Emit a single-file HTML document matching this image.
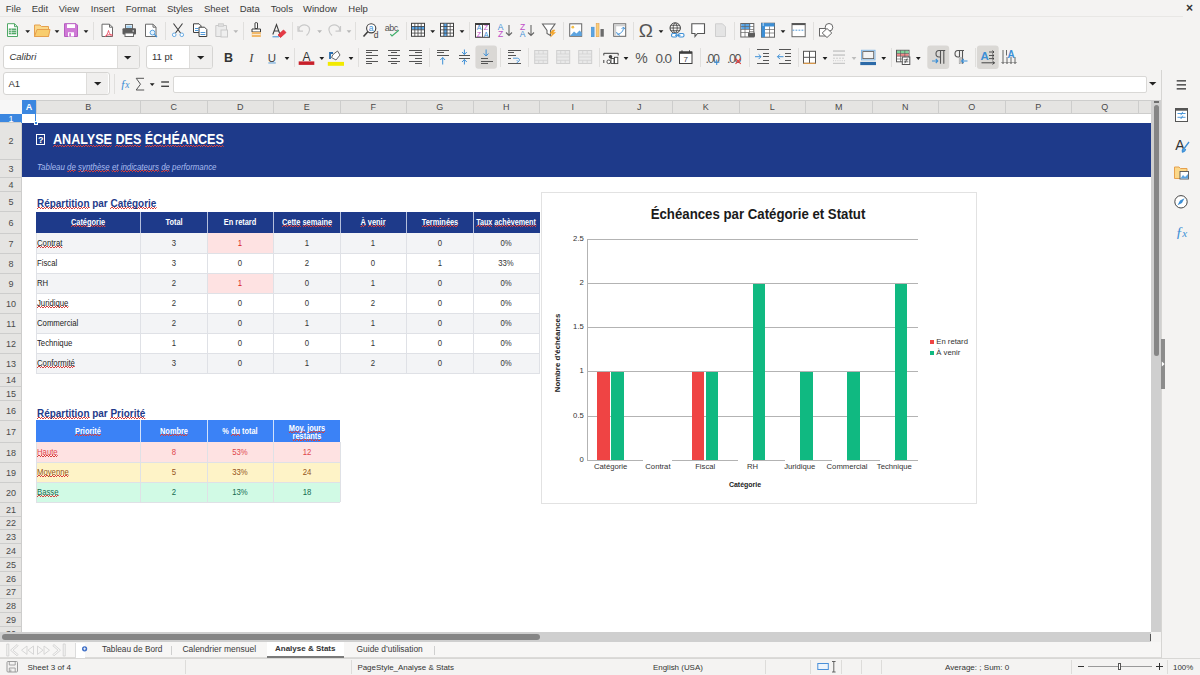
<!DOCTYPE html><html><head><meta charset="utf-8"><style>
html,body{margin:0;padding:0;}
body{width:1200px;height:675px;position:relative;overflow:hidden;background:#f4f3f2;font-family:"Liberation Sans", sans-serif;}
.t{position:absolute;white-space:nowrap;}
.r{position:absolute;box-sizing:border-box;}
.s{position:absolute;overflow:visible;}
.u{background-image:repeating-linear-gradient(90deg,#d8413d 0 1.5px,transparent 1.5px 3px),repeating-linear-gradient(90deg,transparent 0 1.5px,#d8413d 1.5px 3px);background-size:100% 1px,100% 1px;background-position:0 100%,0 calc(100% - 1px);background-repeat:no-repeat;}
</style></head><body>
<div class="t" style="left:5.80px;top:3.96px;font-size:9.5px;line-height:9.5px;color:#3a3a3a;font-weight:normal;font-style:normal;">File</div>
<div class="t" style="left:31.70px;top:3.96px;font-size:9.5px;line-height:9.5px;color:#3a3a3a;font-weight:normal;font-style:normal;">Edit</div>
<div class="t" style="left:58.70px;top:3.96px;font-size:9.5px;line-height:9.5px;color:#3a3a3a;font-weight:normal;font-style:normal;">View</div>
<div class="t" style="left:90.80px;top:3.96px;font-size:9.5px;line-height:9.5px;color:#3a3a3a;font-weight:normal;font-style:normal;">Insert</div>
<div class="t" style="left:125.80px;top:3.96px;font-size:9.5px;line-height:9.5px;color:#3a3a3a;font-weight:normal;font-style:normal;">Format</div>
<div class="t" style="left:167.00px;top:3.96px;font-size:9.5px;line-height:9.5px;color:#3a3a3a;font-weight:normal;font-style:normal;">Styles</div>
<div class="t" style="left:204.00px;top:3.96px;font-size:9.5px;line-height:9.5px;color:#3a3a3a;font-weight:normal;font-style:normal;">Sheet</div>
<div class="t" style="left:239.70px;top:3.96px;font-size:9.5px;line-height:9.5px;color:#3a3a3a;font-weight:normal;font-style:normal;">Data</div>
<div class="t" style="left:270.80px;top:3.96px;font-size:9.5px;line-height:9.5px;color:#3a3a3a;font-weight:normal;font-style:normal;">Tools</div>
<div class="t" style="left:303.00px;top:3.96px;font-size:9.5px;line-height:9.5px;color:#3a3a3a;font-weight:normal;font-style:normal;">Window</div>
<div class="t" style="left:348.30px;top:3.96px;font-size:9.5px;line-height:9.5px;color:#3a3a3a;font-weight:normal;font-style:normal;">Help</div>
<div class="r" style="left:0px;top:15.5px;width:1183px;height:1px;background:#e8e7e5;"></div>
<div class="r" style="left:93px;top:22px;width:1px;height:18px;background:#e0dfdd;"></div>
<div class="r" style="left:165px;top:22px;width:1px;height:18px;background:#e0dfdd;"></div>
<div class="r" style="left:243px;top:22px;width:1px;height:18px;background:#e0dfdd;"></div>
<div class="r" style="left:292px;top:22px;width:1px;height:18px;background:#e0dfdd;"></div>
<div class="r" style="left:355px;top:22px;width:1px;height:18px;background:#e0dfdd;"></div>
<div class="r" style="left:405.6px;top:22px;width:1px;height:18px;background:#e0dfdd;"></div>
<div class="r" style="left:469px;top:22px;width:1px;height:18px;background:#e0dfdd;"></div>
<div class="r" style="left:562.5px;top:22px;width:1px;height:18px;background:#e0dfdd;"></div>
<div class="r" style="left:633px;top:22px;width:1px;height:18px;background:#e0dfdd;"></div>
<div class="r" style="left:733.6px;top:22px;width:1px;height:18px;background:#e0dfdd;"></div>
<div class="r" style="left:813px;top:22px;width:1px;height:18px;background:#e0dfdd;"></div>
<div class="r" style="left:294px;top:48px;width:1px;height:19px;background:#e0dfdd;"></div>
<div class="r" style="left:358px;top:48px;width:1px;height:19px;background:#e0dfdd;"></div>
<div class="r" style="left:429px;top:48px;width:1px;height:19px;background:#e0dfdd;"></div>
<div class="r" style="left:500px;top:48px;width:1px;height:19px;background:#e0dfdd;"></div>
<div class="r" style="left:527.6px;top:48px;width:1px;height:19px;background:#e0dfdd;"></div>
<div class="r" style="left:598.6px;top:48px;width:1px;height:19px;background:#e0dfdd;"></div>
<div class="r" style="left:699.6px;top:48px;width:1px;height:19px;background:#e0dfdd;"></div>
<div class="r" style="left:749px;top:48px;width:1px;height:19px;background:#e0dfdd;"></div>
<div class="r" style="left:798px;top:48px;width:1px;height:19px;background:#e0dfdd;"></div>
<div class="r" style="left:890.5px;top:48px;width:1px;height:19px;background:#e0dfdd;"></div>
<div class="r" style="left:974.7px;top:48px;width:1px;height:19px;background:#e0dfdd;"></div>
<div class="r" style="left:113.6px;top:74px;width:1px;height:20px;background:#e0dfdd;"></div>
<div class="r" style="left:3px;top:45px;width:136.5px;height:23.5px;background:#ffffff;border:1px solid #d6d5d3;border-radius:3px;"></div>
<div class="r" style="left:116.5px;top:46px;width:22px;height:21.5px;background:#f0efee;border-left:1px solid #dedddb;border-radius:0 2px 2px 0;"></div>
<svg class="s" style="left:124.3px;top:55.7px;" width="7.4" height="4" viewBox="0 0 7.4 4"><path d="M0 0 L7.4 0 L3.7 3.6 Z" fill="#222"/></svg>
<div class="t" style="left:9.40px;top:52.46px;font-size:9.5px;line-height:9.5px;color:#333;font-weight:normal;font-style:italic;">Calibri</div>
<div class="r" style="left:145.5px;top:45px;width:67px;height:23.5px;background:#ffffff;border:1px solid #d6d5d3;border-radius:3px;"></div>
<div class="r" style="left:189px;top:46px;width:23px;height:21.5px;background:#f0efee;border-left:1px solid #dedddb;border-radius:0 2px 2px 0;"></div>
<svg class="s" style="left:196.8px;top:55.7px;" width="7.4" height="4" viewBox="0 0 7.4 4"><path d="M0 0 L7.4 0 L3.7 3.6 Z" fill="#222"/></svg>
<div class="t" style="left:152.00px;top:52.46px;font-size:9.5px;line-height:9.5px;color:#333;font-weight:normal;font-style:normal;">11 pt</div>
<div class="r" style="left:3px;top:72.4px;width:106.5px;height:23px;background:#ffffff;border:1px solid #d6d5d3;border-radius:3px;"></div>
<div class="r" style="left:86.4px;top:73.4px;width:22px;height:21px;background:#f0efee;border-left:1px solid #dedddb;border-radius:0 2px 2px 0;"></div>
<svg class="s" style="left:93.8px;top:82.2px;" width="7.4" height="4" viewBox="0 0 7.4 4"><path d="M0 0 L7.4 0 L3.7 3.6 Z" fill="#222"/></svg>
<div class="t" style="left:8.40px;top:79.46px;font-size:9.5px;line-height:9.5px;color:#333;font-weight:normal;font-style:normal;">A1</div>
<div class="r" style="left:173px;top:76px;width:973.5px;height:16.5px;background:#ffffff;border:1px solid #d9d8d6;border-radius:2px;"></div>
<svg class="s" style="left:1148.8px;top:82.2px;" width="7.4" height="4" viewBox="0 0 7.4 4"><path d="M0 0 L7.4 0 L3.7 3.6 Z" fill="#222"/></svg>
<div class="r" style="left:1161px;top:70px;width:39px;height:588px;background:#f4f3f2;border-left:1px solid #d6d5d3;"></div>
<div class="r" style="left:1151.3px;top:100px;width:10px;height:532px;background:#cfcfcf;"></div>
<div class="r" style="left:1154px;top:101px;width:4.7px;height:1.5px;background:#6e6e6e;"></div>
<div class="r" style="left:1153.8px;top:105px;width:5px;height:251px;background:#858585;border-radius:2.5px;"></div>
<div class="r" style="left:1161px;top:339px;width:4.3px;height:50px;background:#8c8c8c;"></div>
<svg class="s" style="left:1161px;top:361px;" width="4" height="6" viewBox="0 0 4 6"><path d="M0.8 0.5 L3.6 3 L0.8 5.5 Z" fill="#fff"/></svg>
<div class="r" style="left:0px;top:632px;width:1151.3px;height:10px;background:#cfcfcf;"></div>
<div class="r" style="left:2px;top:634px;width:538px;height:6px;background:#858585;border-radius:3px;"></div>
<div class="r" style="left:1149.5px;top:634px;width:1.2px;height:7px;background:#555;"></div>
<div class="r" style="left:0px;top:642px;width:1161px;height:16px;background:#f7f6f5;border-bottom:1px solid #dcdbd9;"></div>
<div class="r" style="left:75px;top:642.5px;width:9.5px;height:15px;background:#ffffff;border-left:1px solid #dcdcdc;"></div>
<div class="t" style="left:102.00px;top:645.37px;font-size:8.3px;line-height:8.3px;color:#3a3a3a;font-weight:normal;font-style:normal;">Tableau de Bord</div>
<div class="r" style="left:171px;top:646px;width:1px;height:9px;background:#cfcfcf;"></div>
<div class="t" style="left:182.40px;top:645.20px;font-size:8.5px;line-height:8.5px;color:#3a3a3a;font-weight:normal;font-style:normal;">Calendrier mensuel</div>
<div class="r" style="left:266.6px;top:646px;width:1px;height:9px;background:#cfcfcf;"></div>
<div class="r" style="left:267px;top:642px;width:77px;height:16px;background:#ffffff;"></div>
<div class="r" style="left:267px;top:656px;width:77px;height:1.8px;background:#7a7a7a;"></div>
<div class="t" style="left:275.00px;top:645.43px;font-size:8.0px;line-height:8.0px;color:#333;font-weight:bold;font-style:normal;">Analyse &amp; Stats</div>
<div class="t" style="left:356.60px;top:645.09px;font-size:8.4px;line-height:8.4px;color:#3a3a3a;font-weight:normal;font-style:normal;">Guide d’utilisation</div>
<div class="r" style="left:434.4px;top:646px;width:1px;height:9px;background:#cfcfcf;"></div>
<div class="r" style="left:0px;top:658px;width:1200px;height:17px;background:#f4f3f2;border-top:1px solid #d8d7d5;"></div>
<div class="t" style="left:27.40px;top:663.64px;font-size:8.1px;line-height:8.1px;color:#333;font-weight:normal;font-style:normal;">Sheet 3 of 4</div>
<div class="r" style="left:185px;top:660px;width:1px;height:14px;background:#dddcda;"></div>
<div class="r" style="left:351px;top:660px;width:1px;height:14px;background:#dddcda;"></div>
<div class="r" style="left:764.6px;top:660px;width:1px;height:14px;background:#dddcda;"></div>
<div class="r" style="left:810.4px;top:660px;width:1px;height:14px;background:#dddcda;"></div>
<div class="r" style="left:841.2px;top:660px;width:1px;height:14px;background:#dddcda;"></div>
<div class="r" style="left:861.4px;top:660px;width:1px;height:14px;background:#dddcda;"></div>
<div class="r" style="left:881px;top:660px;width:1px;height:14px;background:#dddcda;"></div>
<div class="r" style="left:1071.3px;top:660px;width:1px;height:14px;background:#dddcda;"></div>
<div class="r" style="left:1167px;top:660px;width:1px;height:14px;background:#dddcda;"></div>
<div class="t" style="left:357.40px;top:663.77px;font-size:7.95px;line-height:7.95px;color:#333;font-weight:normal;font-style:normal;">PageStyle_Analyse &amp; Stats</div>
<div class="t" style="left:653.00px;top:663.77px;font-size:7.95px;line-height:7.95px;color:#333;font-weight:normal;font-style:normal;">English (USA)</div>
<div class="t" style="left:945.00px;top:663.69px;font-size:8.05px;line-height:8.05px;color:#333;font-weight:normal;font-style:normal;">Average: ; Sum: 0</div>
<div class="t" style="left:1173.00px;top:663.81px;font-size:7.9px;line-height:7.9px;color:#333;font-weight:normal;font-style:normal;">100%</div>
<div class="r" style="left:1078px;top:666px;width:6px;height:1.2px;background:#333;"></div>
<div class="r" style="left:1088px;top:666.2px;width:64px;height:1px;background:#9a9a9a;"></div>
<div class="r" style="left:1118px;top:663px;width:2.8px;height:6.5px;background:#ffffff;border:1px solid #555;"></div>
<div class="r" style="left:1156px;top:666px;width:6.5px;height:1.2px;background:#333;"></div>
<div class="r" style="left:1158.6px;top:663.4px;width:1.2px;height:6.5px;background:#333;"></div>
<div class="r" style="left:1161px;top:642px;width:1px;height:16px;background:#d6d5d3;"></div>
<div class="t" style="left:1189.40px;top:2.34px;font-size:12px;line-height:12px;color:#333;font-weight:bold;font-style:normal;transform:translateX(-50%) scaleX(1.0);transform-origin:50% 0;">×</div>
<div style="position:absolute;left:0;top:0;width:1151.3px;height:632px;overflow:hidden">
<div class="r" style="left:0px;top:100px;width:1151.3px;height:532px;background:#ffffff;"></div>
<div class="r" style="left:22px;top:100px;width:1129.3px;height:14px;background:#e5e4e2;border-top:1px solid #cdcdcc;border-bottom:1px solid #cdcdcc;"></div>
<div class="r" style="left:0px;top:100px;width:22px;height:14px;background:#f7f7f7;"></div>
<div class="r" style="left:22px;top:100px;width:14px;height:14px;background:#3b87e0;"></div>
<div class="t" style="left:29.00px;top:102.88px;font-size:9px;line-height:9px;color:#ffffff;font-weight:bold;font-style:normal;transform:translateX(-50%) scaleX(1.0);transform-origin:50% 0;">A</div>
<div class="r" style="left:35.5px;top:101px;width:1px;height:13px;background:#cdcdcc;"></div>
<div class="t" style="left:88.25px;top:102.88px;font-size:9px;line-height:9px;color:#4a4a4a;font-weight:normal;font-style:normal;transform:translateX(-50%) scaleX(1.0);transform-origin:50% 0;">B</div>
<div class="r" style="left:140.0px;top:101px;width:1px;height:13px;background:#cdcdcc;"></div>
<div class="t" style="left:173.75px;top:102.88px;font-size:9px;line-height:9px;color:#4a4a4a;font-weight:normal;font-style:normal;transform:translateX(-50%) scaleX(1.0);transform-origin:50% 0;">C</div>
<div class="r" style="left:206.5px;top:101px;width:1px;height:13px;background:#cdcdcc;"></div>
<div class="t" style="left:240.25px;top:102.88px;font-size:9px;line-height:9px;color:#4a4a4a;font-weight:normal;font-style:normal;transform:translateX(-50%) scaleX(1.0);transform-origin:50% 0;">D</div>
<div class="r" style="left:273.0px;top:101px;width:1px;height:13px;background:#cdcdcc;"></div>
<div class="t" style="left:306.75px;top:102.88px;font-size:9px;line-height:9px;color:#4a4a4a;font-weight:normal;font-style:normal;transform:translateX(-50%) scaleX(1.0);transform-origin:50% 0;">E</div>
<div class="r" style="left:339.5px;top:101px;width:1px;height:13px;background:#cdcdcc;"></div>
<div class="t" style="left:373.25px;top:102.88px;font-size:9px;line-height:9px;color:#4a4a4a;font-weight:normal;font-style:normal;transform:translateX(-50%) scaleX(1.0);transform-origin:50% 0;">F</div>
<div class="r" style="left:406.0px;top:101px;width:1px;height:13px;background:#cdcdcc;"></div>
<div class="t" style="left:439.75px;top:102.88px;font-size:9px;line-height:9px;color:#4a4a4a;font-weight:normal;font-style:normal;transform:translateX(-50%) scaleX(1.0);transform-origin:50% 0;">G</div>
<div class="r" style="left:472.5px;top:101px;width:1px;height:13px;background:#cdcdcc;"></div>
<div class="t" style="left:506.25px;top:102.88px;font-size:9px;line-height:9px;color:#4a4a4a;font-weight:normal;font-style:normal;transform:translateX(-50%) scaleX(1.0);transform-origin:50% 0;">H</div>
<div class="r" style="left:539.0px;top:101px;width:1px;height:13px;background:#cdcdcc;"></div>
<div class="t" style="left:572.75px;top:102.88px;font-size:9px;line-height:9px;color:#4a4a4a;font-weight:normal;font-style:normal;transform:translateX(-50%) scaleX(1.0);transform-origin:50% 0;">I</div>
<div class="r" style="left:605.5px;top:101px;width:1px;height:13px;background:#cdcdcc;"></div>
<div class="t" style="left:639.25px;top:102.88px;font-size:9px;line-height:9px;color:#4a4a4a;font-weight:normal;font-style:normal;transform:translateX(-50%) scaleX(1.0);transform-origin:50% 0;">J</div>
<div class="r" style="left:672.0px;top:101px;width:1px;height:13px;background:#cdcdcc;"></div>
<div class="t" style="left:705.75px;top:102.88px;font-size:9px;line-height:9px;color:#4a4a4a;font-weight:normal;font-style:normal;transform:translateX(-50%) scaleX(1.0);transform-origin:50% 0;">K</div>
<div class="r" style="left:738.5px;top:101px;width:1px;height:13px;background:#cdcdcc;"></div>
<div class="t" style="left:772.25px;top:102.88px;font-size:9px;line-height:9px;color:#4a4a4a;font-weight:normal;font-style:normal;transform:translateX(-50%) scaleX(1.0);transform-origin:50% 0;">L</div>
<div class="r" style="left:805.0px;top:101px;width:1px;height:13px;background:#cdcdcc;"></div>
<div class="t" style="left:838.75px;top:102.88px;font-size:9px;line-height:9px;color:#4a4a4a;font-weight:normal;font-style:normal;transform:translateX(-50%) scaleX(1.0);transform-origin:50% 0;">M</div>
<div class="r" style="left:871.5px;top:101px;width:1px;height:13px;background:#cdcdcc;"></div>
<div class="t" style="left:905.25px;top:102.88px;font-size:9px;line-height:9px;color:#4a4a4a;font-weight:normal;font-style:normal;transform:translateX(-50%) scaleX(1.0);transform-origin:50% 0;">N</div>
<div class="r" style="left:938.0px;top:101px;width:1px;height:13px;background:#cdcdcc;"></div>
<div class="t" style="left:971.75px;top:102.88px;font-size:9px;line-height:9px;color:#4a4a4a;font-weight:normal;font-style:normal;transform:translateX(-50%) scaleX(1.0);transform-origin:50% 0;">O</div>
<div class="r" style="left:1004.5px;top:101px;width:1px;height:13px;background:#cdcdcc;"></div>
<div class="t" style="left:1038.25px;top:102.88px;font-size:9px;line-height:9px;color:#4a4a4a;font-weight:normal;font-style:normal;transform:translateX(-50%) scaleX(1.0);transform-origin:50% 0;">P</div>
<div class="r" style="left:1071.0px;top:101px;width:1px;height:13px;background:#cdcdcc;"></div>
<div class="t" style="left:1104.75px;top:102.88px;font-size:9px;line-height:9px;color:#4a4a4a;font-weight:normal;font-style:normal;transform:translateX(-50%) scaleX(1.0);transform-origin:50% 0;">Q</div>
<div class="r" style="left:1137.5px;top:101px;width:1px;height:13px;background:#cdcdcc;"></div>
<div class="r" style="left:0px;top:114px;width:22px;height:518px;background:#e5e4e2;border-right:1px solid #cdcdcc;"></div>
<div class="r" style="left:0px;top:114px;width:22px;height:8.599999999999994px;background:#3b87e0;"></div>
<div class="r" style="left:0px;top:122.1px;width:21px;height:1px;background:#cdcdcc;"></div>
<div class="t" style="left:11.00px;top:114.78px;font-size:9px;line-height:9px;color:#ffffff;font-weight:normal;font-style:normal;transform:translateX(-50%) scaleX(1.0);transform-origin:50% 0;">1</div>
<div class="r" style="left:0px;top:158.8px;width:21px;height:1px;background:#cdcdcc;"></div>
<div class="t" style="left:11.00px;top:137.43px;font-size:9px;line-height:9px;color:#4a4a4a;font-weight:normal;font-style:normal;transform:translateX(-50%) scaleX(1.0);transform-origin:50% 0;">2</div>
<div class="r" style="left:0px;top:176.9px;width:21px;height:1px;background:#cdcdcc;"></div>
<div class="t" style="left:11.00px;top:164.83px;font-size:9px;line-height:9px;color:#4a4a4a;font-weight:normal;font-style:normal;transform:translateX(-50%) scaleX(1.0);transform-origin:50% 0;">3</div>
<div class="r" style="left:0px;top:190.8px;width:21px;height:1px;background:#cdcdcc;"></div>
<div class="t" style="left:11.00px;top:180.83px;font-size:9px;line-height:9px;color:#4a4a4a;font-weight:normal;font-style:normal;transform:translateX(-50%) scaleX(1.0);transform-origin:50% 0;">4</div>
<div class="r" style="left:0px;top:210.5px;width:21px;height:1px;background:#cdcdcc;"></div>
<div class="t" style="left:11.00px;top:197.63px;font-size:9px;line-height:9px;color:#4a4a4a;font-weight:normal;font-style:normal;transform:translateX(-50%) scaleX(1.0);transform-origin:50% 0;">5</div>
<div class="r" style="left:0px;top:232.8px;width:21px;height:1px;background:#cdcdcc;"></div>
<div class="t" style="left:11.00px;top:218.63px;font-size:9px;line-height:9px;color:#4a4a4a;font-weight:normal;font-style:normal;transform:translateX(-50%) scaleX(1.0);transform-origin:50% 0;">6</div>
<div class="r" style="left:0px;top:252.8px;width:21px;height:1px;background:#cdcdcc;"></div>
<div class="t" style="left:11.00px;top:239.78px;font-size:9px;line-height:9px;color:#4a4a4a;font-weight:normal;font-style:normal;transform:translateX(-50%) scaleX(1.0);transform-origin:50% 0;">7</div>
<div class="r" style="left:0px;top:272.8px;width:21px;height:1px;background:#cdcdcc;"></div>
<div class="t" style="left:11.00px;top:259.78px;font-size:9px;line-height:9px;color:#4a4a4a;font-weight:normal;font-style:normal;transform:translateX(-50%) scaleX(1.0);transform-origin:50% 0;">8</div>
<div class="r" style="left:0px;top:292.8px;width:21px;height:1px;background:#cdcdcc;"></div>
<div class="t" style="left:11.00px;top:279.78px;font-size:9px;line-height:9px;color:#4a4a4a;font-weight:normal;font-style:normal;transform:translateX(-50%) scaleX(1.0);transform-origin:50% 0;">9</div>
<div class="r" style="left:0px;top:312.8px;width:21px;height:1px;background:#cdcdcc;"></div>
<div class="t" style="left:11.00px;top:299.78px;font-size:9px;line-height:9px;color:#4a4a4a;font-weight:normal;font-style:normal;transform:translateX(-50%) scaleX(1.0);transform-origin:50% 0;">10</div>
<div class="r" style="left:0px;top:332.8px;width:21px;height:1px;background:#cdcdcc;"></div>
<div class="t" style="left:11.00px;top:319.78px;font-size:9px;line-height:9px;color:#4a4a4a;font-weight:normal;font-style:normal;transform:translateX(-50%) scaleX(1.0);transform-origin:50% 0;">11</div>
<div class="r" style="left:0px;top:352.8px;width:21px;height:1px;background:#cdcdcc;"></div>
<div class="t" style="left:11.00px;top:339.78px;font-size:9px;line-height:9px;color:#4a4a4a;font-weight:normal;font-style:normal;transform:translateX(-50%) scaleX(1.0);transform-origin:50% 0;">12</div>
<div class="r" style="left:0px;top:372.5px;width:21px;height:1px;background:#cdcdcc;"></div>
<div class="t" style="left:11.00px;top:359.63px;font-size:9px;line-height:9px;color:#4a4a4a;font-weight:normal;font-style:normal;transform:translateX(-50%) scaleX(1.0);transform-origin:50% 0;">13</div>
<div class="r" style="left:0px;top:385.9px;width:21px;height:1px;background:#cdcdcc;"></div>
<div class="t" style="left:11.00px;top:376.18px;font-size:9px;line-height:9px;color:#4a4a4a;font-weight:normal;font-style:normal;transform:translateX(-50%) scaleX(1.0);transform-origin:50% 0;">14</div>
<div class="r" style="left:0px;top:399.8px;width:21px;height:1px;background:#cdcdcc;"></div>
<div class="t" style="left:11.00px;top:389.83px;font-size:9px;line-height:9px;color:#4a4a4a;font-weight:normal;font-style:normal;transform:translateX(-50%) scaleX(1.0);transform-origin:50% 0;">15</div>
<div class="r" style="left:0px;top:419.8px;width:21px;height:1px;background:#cdcdcc;"></div>
<div class="t" style="left:11.00px;top:406.78px;font-size:9px;line-height:9px;color:#4a4a4a;font-weight:normal;font-style:normal;transform:translateX(-50%) scaleX(1.0);transform-origin:50% 0;">16</div>
<div class="r" style="left:0px;top:441.9px;width:21px;height:1px;background:#cdcdcc;"></div>
<div class="t" style="left:11.00px;top:427.83px;font-size:9px;line-height:9px;color:#4a4a4a;font-weight:normal;font-style:normal;transform:translateX(-50%) scaleX(1.0);transform-origin:50% 0;">17</div>
<div class="r" style="left:0px;top:461.9px;width:21px;height:1px;background:#cdcdcc;"></div>
<div class="t" style="left:11.00px;top:448.88px;font-size:9px;line-height:9px;color:#4a4a4a;font-weight:normal;font-style:normal;transform:translateX(-50%) scaleX(1.0);transform-origin:50% 0;">18</div>
<div class="r" style="left:0px;top:481.9px;width:21px;height:1px;background:#cdcdcc;"></div>
<div class="t" style="left:11.00px;top:468.88px;font-size:9px;line-height:9px;color:#4a4a4a;font-weight:normal;font-style:normal;transform:translateX(-50%) scaleX(1.0);transform-origin:50% 0;">19</div>
<div class="r" style="left:0px;top:501.8px;width:21px;height:1px;background:#cdcdcc;"></div>
<div class="t" style="left:11.00px;top:488.83px;font-size:9px;line-height:9px;color:#4a4a4a;font-weight:normal;font-style:normal;transform:translateX(-50%) scaleX(1.0);transform-origin:50% 0;">20</div>
<div class="r" style="left:0px;top:515.6px;width:21px;height:1px;background:#cdcdcc;"></div>
<div class="t" style="left:11.00px;top:505.68px;font-size:9px;line-height:9px;color:#4a4a4a;font-weight:normal;font-style:normal;transform:translateX(-50%) scaleX(1.0);transform-origin:50% 0;">21</div>
<div class="r" style="left:0px;top:529.4px;width:21px;height:1px;background:#cdcdcc;"></div>
<div class="t" style="left:11.00px;top:519.48px;font-size:9px;line-height:9px;color:#4a4a4a;font-weight:normal;font-style:normal;transform:translateX(-50%) scaleX(1.0);transform-origin:50% 0;">22</div>
<div class="r" style="left:0px;top:543.1999999999999px;width:21px;height:1px;background:#cdcdcc;"></div>
<div class="t" style="left:11.00px;top:533.28px;font-size:9px;line-height:9px;color:#4a4a4a;font-weight:normal;font-style:normal;transform:translateX(-50%) scaleX(1.0);transform-origin:50% 0;">23</div>
<div class="r" style="left:0px;top:556.9999999999999px;width:21px;height:1px;background:#cdcdcc;"></div>
<div class="t" style="left:11.00px;top:547.08px;font-size:9px;line-height:9px;color:#4a4a4a;font-weight:normal;font-style:normal;transform:translateX(-50%) scaleX(1.0);transform-origin:50% 0;">24</div>
<div class="r" style="left:0px;top:570.7999999999998px;width:21px;height:1px;background:#cdcdcc;"></div>
<div class="t" style="left:11.00px;top:560.88px;font-size:9px;line-height:9px;color:#4a4a4a;font-weight:normal;font-style:normal;transform:translateX(-50%) scaleX(1.0);transform-origin:50% 0;">25</div>
<div class="r" style="left:0px;top:584.5999999999998px;width:21px;height:1px;background:#cdcdcc;"></div>
<div class="t" style="left:11.00px;top:574.68px;font-size:9px;line-height:9px;color:#4a4a4a;font-weight:normal;font-style:normal;transform:translateX(-50%) scaleX(1.0);transform-origin:50% 0;">26</div>
<div class="r" style="left:0px;top:598.3999999999997px;width:21px;height:1px;background:#cdcdcc;"></div>
<div class="t" style="left:11.00px;top:588.48px;font-size:9px;line-height:9px;color:#4a4a4a;font-weight:normal;font-style:normal;transform:translateX(-50%) scaleX(1.0);transform-origin:50% 0;">27</div>
<div class="r" style="left:0px;top:612.1999999999997px;width:21px;height:1px;background:#cdcdcc;"></div>
<div class="t" style="left:11.00px;top:602.28px;font-size:9px;line-height:9px;color:#4a4a4a;font-weight:normal;font-style:normal;transform:translateX(-50%) scaleX(1.0);transform-origin:50% 0;">28</div>
<div class="r" style="left:0px;top:625.9999999999997px;width:21px;height:1px;background:#cdcdcc;"></div>
<div class="t" style="left:11.00px;top:616.08px;font-size:9px;line-height:9px;color:#4a4a4a;font-weight:normal;font-style:normal;transform:translateX(-50%) scaleX(1.0);transform-origin:50% 0;">29</div>
<div class="r" style="left:0px;top:639.7999999999996px;width:21px;height:1px;background:#cdcdcc;"></div>
<div class="t" style="left:11.00px;top:629.88px;font-size:9px;line-height:9px;color:#4a4a4a;font-weight:normal;font-style:normal;transform:translateX(-50%) scaleX(1.0);transform-origin:50% 0;">30</div>
<div class="r" style="left:22px;top:122.6px;width:1129.3px;height:54.80000000000001px;background:#1e3a8a;"></div>
<div class="r" style="left:35px;top:114px;width:1.2px;height:9px;background:#3b87e0;"></div>
<div class="r" style="left:33.5px;top:121px;width:4px;height:4px;background:#3b87e0;border:1px solid #fff;"></div>
<div class="r" style="left:36.3px;top:134.3px;width:8.8px;height:11px;background:transparent;border:1px solid #ffffff;"></div>
<div class="t" style="left:40.70px;top:135.68px;font-size:9px;line-height:9px;color:#ffffff;font-weight:bold;font-style:normal;transform:translateX(-50%) scaleX(1.0);transform-origin:50% 0;">?</div>
<div class="t" style="left:52.50px;top:132.44px;font-size:14.6px;line-height:14.6px;color:#ffffff;font-weight:bold;font-style:normal;transform:scaleX(0.862);transform-origin:0 0;"><span class="u">ANALYSE</span> <span class="u">DES</span> <span class="u">ÉCHÉANCES</span></div>
<div class="t" style="left:37.00px;top:163.02px;font-size:8.6px;line-height:8.6px;color:#a8bdf0;font-weight:normal;font-style:italic;transform:scaleX(0.92);transform-origin:0 0;">Tableau <span class="u">de</span> <span class="u">synthèse</span> <span class="u">et</span> <span class="u">indicateurs</span> <span class="u">de</span> performance</div>
<div class="t" style="left:37.00px;top:198.43px;font-size:11.3px;line-height:11.3px;color:#1e3a8a;font-weight:bold;font-style:normal;transform:scaleX(0.88);transform-origin:0 0;"><span class="u">Répartition</span> par <span class="u">Catégorie</span></div>
<div class="t" style="left:37.00px;top:407.93px;font-size:11.3px;line-height:11.3px;color:#1e3a8a;font-weight:bold;font-style:normal;transform:scaleX(0.88);transform-origin:0 0;"><span class="u">Répartition</span> par <span class="u">Priorité</span></div>
<div class="r" style="left:36px;top:211.5px;width:503.5px;height:21.80000000000001px;background:#1e3a8a;"></div>
<div class="t" style="left:88.25px;top:217.72px;font-size:8.6px;line-height:8.6px;color:#ffffff;font-weight:bold;font-style:normal;transform:translateX(-50%) scaleX(0.86);transform-origin:50% 0;"><span class="u">Catégorie</span></div>
<div class="t" style="left:173.75px;top:217.72px;font-size:8.6px;line-height:8.6px;color:#ffffff;font-weight:bold;font-style:normal;transform:translateX(-50%) scaleX(0.86);transform-origin:50% 0;">Total</div>
<div class="r" style="left:140.0px;top:211.5px;width:1px;height:21.80000000000001px;background:#b4bfdc;"></div>
<div class="t" style="left:240.25px;top:217.72px;font-size:8.6px;line-height:8.6px;color:#ffffff;font-weight:bold;font-style:normal;transform:translateX(-50%) scaleX(0.86);transform-origin:50% 0;">En retard</div>
<div class="r" style="left:206.5px;top:211.5px;width:1px;height:21.80000000000001px;background:#b4bfdc;"></div>
<div class="t" style="left:306.75px;top:217.72px;font-size:8.6px;line-height:8.6px;color:#ffffff;font-weight:bold;font-style:normal;transform:translateX(-50%) scaleX(0.86);transform-origin:50% 0;"><span class="u">Cette</span> <span class="u">semaine</span></div>
<div class="r" style="left:273.0px;top:211.5px;width:1px;height:21.80000000000001px;background:#b4bfdc;"></div>
<div class="t" style="left:373.25px;top:217.72px;font-size:8.6px;line-height:8.6px;color:#ffffff;font-weight:bold;font-style:normal;transform:translateX(-50%) scaleX(0.86);transform-origin:50% 0;"><span class="u">À</span> <span class="u">venir</span></div>
<div class="r" style="left:339.5px;top:211.5px;width:1px;height:21.80000000000001px;background:#b4bfdc;"></div>
<div class="t" style="left:439.75px;top:217.72px;font-size:8.6px;line-height:8.6px;color:#ffffff;font-weight:bold;font-style:normal;transform:translateX(-50%) scaleX(0.86);transform-origin:50% 0;"><span class="u">Terminées</span></div>
<div class="r" style="left:406.0px;top:211.5px;width:1px;height:21.80000000000001px;background:#b4bfdc;"></div>
<div class="t" style="left:506.25px;top:217.72px;font-size:8.6px;line-height:8.6px;color:#ffffff;font-weight:bold;font-style:normal;transform:translateX(-50%) scaleX(0.835);transform-origin:50% 0;"><span class="u">Taux</span> <span class="u">achèvement</span></div>
<div class="r" style="left:472.5px;top:211.5px;width:1px;height:21.80000000000001px;background:#b4bfdc;"></div>
<div class="r" style="left:36px;top:233.3px;width:503.5px;height:20.0px;background:#f3f4f6;"></div>
<div class="t" style="left:37.00px;top:239.22px;font-size:8.6px;line-height:8.6px;color:#222222;font-weight:normal;font-style:normal;transform:scaleX(0.9);transform-origin:0 0;"><span class="u">Contrat</span></div>
<div class="t" style="left:173.75px;top:239.22px;font-size:8.6px;line-height:8.6px;color:#333333;font-weight:normal;font-style:normal;transform:translateX(-50%) scaleX(0.9);transform-origin:50% 0;">3</div>
<div class="r" style="left:207px;top:233.3px;width:66.5px;height:20.0px;background:#fee2e2;"></div>
<div class="t" style="left:240.25px;top:239.22px;font-size:8.6px;line-height:8.6px;color:#dc2626;font-weight:normal;font-style:normal;transform:translateX(-50%) scaleX(0.9);transform-origin:50% 0;">1</div>
<div class="t" style="left:306.75px;top:239.22px;font-size:8.6px;line-height:8.6px;color:#333333;font-weight:normal;font-style:normal;transform:translateX(-50%) scaleX(0.9);transform-origin:50% 0;">1</div>
<div class="t" style="left:373.25px;top:239.22px;font-size:8.6px;line-height:8.6px;color:#333333;font-weight:normal;font-style:normal;transform:translateX(-50%) scaleX(0.9);transform-origin:50% 0;">1</div>
<div class="t" style="left:439.75px;top:239.22px;font-size:8.6px;line-height:8.6px;color:#333333;font-weight:normal;font-style:normal;transform:translateX(-50%) scaleX(0.9);transform-origin:50% 0;">0</div>
<div class="t" style="left:506.25px;top:239.22px;font-size:8.6px;line-height:8.6px;color:#333333;font-weight:normal;font-style:normal;transform:translateX(-50%) scaleX(0.9);transform-origin:50% 0;">0%</div>
<div class="r" style="left:36px;top:253.3px;width:503.5px;height:20.0px;background:#ffffff;"></div>
<div class="t" style="left:37.00px;top:259.22px;font-size:8.6px;line-height:8.6px;color:#222222;font-weight:normal;font-style:normal;transform:scaleX(0.9);transform-origin:0 0;">Fiscal</div>
<div class="t" style="left:173.75px;top:259.22px;font-size:8.6px;line-height:8.6px;color:#333333;font-weight:normal;font-style:normal;transform:translateX(-50%) scaleX(0.9);transform-origin:50% 0;">3</div>
<div class="t" style="left:240.25px;top:259.22px;font-size:8.6px;line-height:8.6px;color:#333333;font-weight:normal;font-style:normal;transform:translateX(-50%) scaleX(0.9);transform-origin:50% 0;">0</div>
<div class="t" style="left:306.75px;top:259.22px;font-size:8.6px;line-height:8.6px;color:#333333;font-weight:normal;font-style:normal;transform:translateX(-50%) scaleX(0.9);transform-origin:50% 0;">2</div>
<div class="t" style="left:373.25px;top:259.22px;font-size:8.6px;line-height:8.6px;color:#333333;font-weight:normal;font-style:normal;transform:translateX(-50%) scaleX(0.9);transform-origin:50% 0;">0</div>
<div class="t" style="left:439.75px;top:259.22px;font-size:8.6px;line-height:8.6px;color:#333333;font-weight:normal;font-style:normal;transform:translateX(-50%) scaleX(0.9);transform-origin:50% 0;">1</div>
<div class="t" style="left:506.25px;top:259.22px;font-size:8.6px;line-height:8.6px;color:#333333;font-weight:normal;font-style:normal;transform:translateX(-50%) scaleX(0.9);transform-origin:50% 0;">33%</div>
<div class="r" style="left:36px;top:273.3px;width:503.5px;height:20.0px;background:#f3f4f6;"></div>
<div class="t" style="left:37.00px;top:279.22px;font-size:8.6px;line-height:8.6px;color:#222222;font-weight:normal;font-style:normal;transform:scaleX(0.9);transform-origin:0 0;">RH</div>
<div class="t" style="left:173.75px;top:279.22px;font-size:8.6px;line-height:8.6px;color:#333333;font-weight:normal;font-style:normal;transform:translateX(-50%) scaleX(0.9);transform-origin:50% 0;">2</div>
<div class="r" style="left:207px;top:273.3px;width:66.5px;height:20.0px;background:#fee2e2;"></div>
<div class="t" style="left:240.25px;top:279.22px;font-size:8.6px;line-height:8.6px;color:#dc2626;font-weight:normal;font-style:normal;transform:translateX(-50%) scaleX(0.9);transform-origin:50% 0;">1</div>
<div class="t" style="left:306.75px;top:279.22px;font-size:8.6px;line-height:8.6px;color:#333333;font-weight:normal;font-style:normal;transform:translateX(-50%) scaleX(0.9);transform-origin:50% 0;">0</div>
<div class="t" style="left:373.25px;top:279.22px;font-size:8.6px;line-height:8.6px;color:#333333;font-weight:normal;font-style:normal;transform:translateX(-50%) scaleX(0.9);transform-origin:50% 0;">1</div>
<div class="t" style="left:439.75px;top:279.22px;font-size:8.6px;line-height:8.6px;color:#333333;font-weight:normal;font-style:normal;transform:translateX(-50%) scaleX(0.9);transform-origin:50% 0;">0</div>
<div class="t" style="left:506.25px;top:279.22px;font-size:8.6px;line-height:8.6px;color:#333333;font-weight:normal;font-style:normal;transform:translateX(-50%) scaleX(0.9);transform-origin:50% 0;">0%</div>
<div class="r" style="left:36px;top:293.3px;width:503.5px;height:20.0px;background:#ffffff;"></div>
<div class="t" style="left:37.00px;top:299.22px;font-size:8.6px;line-height:8.6px;color:#222222;font-weight:normal;font-style:normal;transform:scaleX(0.9);transform-origin:0 0;"><span class="u">Juridique</span></div>
<div class="t" style="left:173.75px;top:299.22px;font-size:8.6px;line-height:8.6px;color:#333333;font-weight:normal;font-style:normal;transform:translateX(-50%) scaleX(0.9);transform-origin:50% 0;">2</div>
<div class="t" style="left:240.25px;top:299.22px;font-size:8.6px;line-height:8.6px;color:#333333;font-weight:normal;font-style:normal;transform:translateX(-50%) scaleX(0.9);transform-origin:50% 0;">0</div>
<div class="t" style="left:306.75px;top:299.22px;font-size:8.6px;line-height:8.6px;color:#333333;font-weight:normal;font-style:normal;transform:translateX(-50%) scaleX(0.9);transform-origin:50% 0;">0</div>
<div class="t" style="left:373.25px;top:299.22px;font-size:8.6px;line-height:8.6px;color:#333333;font-weight:normal;font-style:normal;transform:translateX(-50%) scaleX(0.9);transform-origin:50% 0;">2</div>
<div class="t" style="left:439.75px;top:299.22px;font-size:8.6px;line-height:8.6px;color:#333333;font-weight:normal;font-style:normal;transform:translateX(-50%) scaleX(0.9);transform-origin:50% 0;">0</div>
<div class="t" style="left:506.25px;top:299.22px;font-size:8.6px;line-height:8.6px;color:#333333;font-weight:normal;font-style:normal;transform:translateX(-50%) scaleX(0.9);transform-origin:50% 0;">0%</div>
<div class="r" style="left:36px;top:313.3px;width:503.5px;height:20.0px;background:#f3f4f6;"></div>
<div class="t" style="left:37.00px;top:319.22px;font-size:8.6px;line-height:8.6px;color:#222222;font-weight:normal;font-style:normal;transform:scaleX(0.9);transform-origin:0 0;">Commercial</div>
<div class="t" style="left:173.75px;top:319.22px;font-size:8.6px;line-height:8.6px;color:#333333;font-weight:normal;font-style:normal;transform:translateX(-50%) scaleX(0.9);transform-origin:50% 0;">2</div>
<div class="t" style="left:240.25px;top:319.22px;font-size:8.6px;line-height:8.6px;color:#333333;font-weight:normal;font-style:normal;transform:translateX(-50%) scaleX(0.9);transform-origin:50% 0;">0</div>
<div class="t" style="left:306.75px;top:319.22px;font-size:8.6px;line-height:8.6px;color:#333333;font-weight:normal;font-style:normal;transform:translateX(-50%) scaleX(0.9);transform-origin:50% 0;">1</div>
<div class="t" style="left:373.25px;top:319.22px;font-size:8.6px;line-height:8.6px;color:#333333;font-weight:normal;font-style:normal;transform:translateX(-50%) scaleX(0.9);transform-origin:50% 0;">1</div>
<div class="t" style="left:439.75px;top:319.22px;font-size:8.6px;line-height:8.6px;color:#333333;font-weight:normal;font-style:normal;transform:translateX(-50%) scaleX(0.9);transform-origin:50% 0;">0</div>
<div class="t" style="left:506.25px;top:319.22px;font-size:8.6px;line-height:8.6px;color:#333333;font-weight:normal;font-style:normal;transform:translateX(-50%) scaleX(0.9);transform-origin:50% 0;">0%</div>
<div class="r" style="left:36px;top:333.3px;width:503.5px;height:20.0px;background:#ffffff;"></div>
<div class="t" style="left:37.00px;top:339.22px;font-size:8.6px;line-height:8.6px;color:#222222;font-weight:normal;font-style:normal;transform:scaleX(0.9);transform-origin:0 0;">Technique</div>
<div class="t" style="left:173.75px;top:339.22px;font-size:8.6px;line-height:8.6px;color:#333333;font-weight:normal;font-style:normal;transform:translateX(-50%) scaleX(0.9);transform-origin:50% 0;">1</div>
<div class="t" style="left:240.25px;top:339.22px;font-size:8.6px;line-height:8.6px;color:#333333;font-weight:normal;font-style:normal;transform:translateX(-50%) scaleX(0.9);transform-origin:50% 0;">0</div>
<div class="t" style="left:306.75px;top:339.22px;font-size:8.6px;line-height:8.6px;color:#333333;font-weight:normal;font-style:normal;transform:translateX(-50%) scaleX(0.9);transform-origin:50% 0;">0</div>
<div class="t" style="left:373.25px;top:339.22px;font-size:8.6px;line-height:8.6px;color:#333333;font-weight:normal;font-style:normal;transform:translateX(-50%) scaleX(0.9);transform-origin:50% 0;">1</div>
<div class="t" style="left:439.75px;top:339.22px;font-size:8.6px;line-height:8.6px;color:#333333;font-weight:normal;font-style:normal;transform:translateX(-50%) scaleX(0.9);transform-origin:50% 0;">0</div>
<div class="t" style="left:506.25px;top:339.22px;font-size:8.6px;line-height:8.6px;color:#333333;font-weight:normal;font-style:normal;transform:translateX(-50%) scaleX(0.9);transform-origin:50% 0;">0%</div>
<div class="r" style="left:36px;top:353.3px;width:503.5px;height:19.69999999999999px;background:#f3f4f6;"></div>
<div class="t" style="left:37.00px;top:359.22px;font-size:8.6px;line-height:8.6px;color:#222222;font-weight:normal;font-style:normal;transform:scaleX(0.9);transform-origin:0 0;"><span class="u">Conformité</span></div>
<div class="t" style="left:173.75px;top:359.22px;font-size:8.6px;line-height:8.6px;color:#333333;font-weight:normal;font-style:normal;transform:translateX(-50%) scaleX(0.9);transform-origin:50% 0;">3</div>
<div class="t" style="left:240.25px;top:359.22px;font-size:8.6px;line-height:8.6px;color:#333333;font-weight:normal;font-style:normal;transform:translateX(-50%) scaleX(0.9);transform-origin:50% 0;">0</div>
<div class="t" style="left:306.75px;top:359.22px;font-size:8.6px;line-height:8.6px;color:#333333;font-weight:normal;font-style:normal;transform:translateX(-50%) scaleX(0.9);transform-origin:50% 0;">1</div>
<div class="t" style="left:373.25px;top:359.22px;font-size:8.6px;line-height:8.6px;color:#333333;font-weight:normal;font-style:normal;transform:translateX(-50%) scaleX(0.9);transform-origin:50% 0;">2</div>
<div class="t" style="left:439.75px;top:359.22px;font-size:8.6px;line-height:8.6px;color:#333333;font-weight:normal;font-style:normal;transform:translateX(-50%) scaleX(0.9);transform-origin:50% 0;">0</div>
<div class="t" style="left:506.25px;top:359.22px;font-size:8.6px;line-height:8.6px;color:#333333;font-weight:normal;font-style:normal;transform:translateX(-50%) scaleX(0.9);transform-origin:50% 0;">0%</div>
<div class="r" style="left:36px;top:252.8px;width:503.5px;height:1px;background:#dfe1e6;"></div>
<div class="r" style="left:36px;top:272.8px;width:503.5px;height:1px;background:#dfe1e6;"></div>
<div class="r" style="left:36px;top:292.8px;width:503.5px;height:1px;background:#dfe1e6;"></div>
<div class="r" style="left:36px;top:312.8px;width:503.5px;height:1px;background:#dfe1e6;"></div>
<div class="r" style="left:36px;top:332.8px;width:503.5px;height:1px;background:#dfe1e6;"></div>
<div class="r" style="left:36px;top:352.8px;width:503.5px;height:1px;background:#dfe1e6;"></div>
<div class="r" style="left:36px;top:372.5px;width:503.5px;height:1px;background:#dfe1e6;"></div>
<div class="r" style="left:35.5px;top:233.3px;width:1px;height:139.7px;background:#dfe1e6;"></div>
<div class="r" style="left:140.0px;top:233.3px;width:1px;height:139.7px;background:#dfe1e6;"></div>
<div class="r" style="left:206.5px;top:233.3px;width:1px;height:139.7px;background:#dfe1e6;"></div>
<div class="r" style="left:273.0px;top:233.3px;width:1px;height:139.7px;background:#dfe1e6;"></div>
<div class="r" style="left:339.5px;top:233.3px;width:1px;height:139.7px;background:#dfe1e6;"></div>
<div class="r" style="left:406.0px;top:233.3px;width:1px;height:139.7px;background:#dfe1e6;"></div>
<div class="r" style="left:472.5px;top:233.3px;width:1px;height:139.7px;background:#dfe1e6;"></div>
<div class="r" style="left:539.0px;top:233.3px;width:1px;height:139.7px;background:#dfe1e6;"></div>
<div class="r" style="left:36px;top:420.3px;width:304px;height:22.099999999999966px;background:#3b82f6;"></div>
<div class="t" style="left:88.25px;top:426.72px;font-size:8.6px;line-height:8.6px;color:#ffffff;font-weight:bold;font-style:normal;transform:translateX(-50%) scaleX(0.86);transform-origin:50% 0;"><span class="u">Priorité</span></div>
<div class="t" style="left:173.75px;top:426.72px;font-size:8.6px;line-height:8.6px;color:#ffffff;font-weight:bold;font-style:normal;transform:translateX(-50%) scaleX(0.86);transform-origin:50% 0;"><span class="u">Nombre</span></div>
<div class="r" style="left:140.0px;top:420.3px;width:1px;height:22.099999999999966px;background:#d2e2fb;"></div>
<div class="t" style="left:240.25px;top:426.72px;font-size:8.6px;line-height:8.6px;color:#ffffff;font-weight:bold;font-style:normal;transform:translateX(-50%) scaleX(0.86);transform-origin:50% 0;">% <span class="u">du</span> total</div>
<div class="r" style="left:206.5px;top:420.3px;width:1px;height:22.099999999999966px;background:#d2e2fb;"></div>
<div class="t" style="left:306.75px;top:423.72px;font-size:8.6px;line-height:8.6px;color:#ffffff;font-weight:bold;font-style:normal;transform:translateX(-50%) scaleX(0.86);transform-origin:50% 0;"><span class="u">Moy.</span> <span class="u">jours</span></div>
<div class="t" style="left:306.75px;top:432.22px;font-size:8.6px;line-height:8.6px;color:#ffffff;font-weight:bold;font-style:normal;transform:translateX(-50%) scaleX(0.86);transform-origin:50% 0;"><span class="u">restants</span></div>
<div class="r" style="left:273.0px;top:420.3px;width:1px;height:22.099999999999966px;background:#d2e2fb;"></div>
<div class="r" style="left:36px;top:442.4px;width:304px;height:20.0px;background:#fee2e2;"></div>
<div class="t" style="left:37.00px;top:448.32px;font-size:8.6px;line-height:8.6px;color:#e0474c;font-weight:normal;font-style:normal;transform:scaleX(0.9);transform-origin:0 0;"><span class="u">Haute</span></div>
<div class="t" style="left:173.75px;top:448.32px;font-size:8.6px;line-height:8.6px;color:#e0474c;font-weight:normal;font-style:normal;transform:translateX(-50%) scaleX(0.9);transform-origin:50% 0;">8</div>
<div class="t" style="left:240.25px;top:448.32px;font-size:8.6px;line-height:8.6px;color:#e0474c;font-weight:normal;font-style:normal;transform:translateX(-50%) scaleX(0.9);transform-origin:50% 0;">53%</div>
<div class="t" style="left:306.75px;top:448.32px;font-size:8.6px;line-height:8.6px;color:#e0474c;font-weight:normal;font-style:normal;transform:translateX(-50%) scaleX(0.9);transform-origin:50% 0;">12</div>
<div class="r" style="left:36px;top:462.4px;width:304px;height:20.0px;background:#fef3c7;"></div>
<div class="t" style="left:37.00px;top:468.32px;font-size:8.6px;line-height:8.6px;color:#94531a;font-weight:normal;font-style:normal;transform:scaleX(0.9);transform-origin:0 0;"><span class="u">Moyenne</span></div>
<div class="t" style="left:173.75px;top:468.32px;font-size:8.6px;line-height:8.6px;color:#94531a;font-weight:normal;font-style:normal;transform:translateX(-50%) scaleX(0.9);transform-origin:50% 0;">5</div>
<div class="t" style="left:240.25px;top:468.32px;font-size:8.6px;line-height:8.6px;color:#94531a;font-weight:normal;font-style:normal;transform:translateX(-50%) scaleX(0.9);transform-origin:50% 0;">33%</div>
<div class="t" style="left:306.75px;top:468.32px;font-size:8.6px;line-height:8.6px;color:#94531a;font-weight:normal;font-style:normal;transform:translateX(-50%) scaleX(0.9);transform-origin:50% 0;">24</div>
<div class="r" style="left:36px;top:482.4px;width:304px;height:19.900000000000034px;background:#d1fae5;"></div>
<div class="t" style="left:37.00px;top:488.32px;font-size:8.6px;line-height:8.6px;color:#156b50;font-weight:normal;font-style:normal;transform:scaleX(0.9);transform-origin:0 0;"><span class="u">Basse</span></div>
<div class="t" style="left:173.75px;top:488.32px;font-size:8.6px;line-height:8.6px;color:#156b50;font-weight:normal;font-style:normal;transform:translateX(-50%) scaleX(0.9);transform-origin:50% 0;">2</div>
<div class="t" style="left:240.25px;top:488.32px;font-size:8.6px;line-height:8.6px;color:#156b50;font-weight:normal;font-style:normal;transform:translateX(-50%) scaleX(0.9);transform-origin:50% 0;">13%</div>
<div class="t" style="left:306.75px;top:488.32px;font-size:8.6px;line-height:8.6px;color:#156b50;font-weight:normal;font-style:normal;transform:translateX(-50%) scaleX(0.9);transform-origin:50% 0;">18</div>
<div class="r" style="left:36px;top:461.9px;width:304px;height:1px;background:#dfe1e6;"></div>
<div class="r" style="left:36px;top:481.9px;width:304px;height:1px;background:#dfe1e6;"></div>
<div class="r" style="left:36px;top:501.8px;width:304px;height:1px;background:#dfe1e6;"></div>
<div class="r" style="left:35.5px;top:442.4px;width:1px;height:59.900000000000034px;background:#dfe1e6;"></div>
<div class="r" style="left:140.0px;top:442.4px;width:1px;height:59.900000000000034px;background:#dfe1e6;"></div>
<div class="r" style="left:206.5px;top:442.4px;width:1px;height:59.900000000000034px;background:#dfe1e6;"></div>
<div class="r" style="left:273.0px;top:442.4px;width:1px;height:59.900000000000034px;background:#dfe1e6;"></div>
<div class="r" style="left:339.5px;top:442.4px;width:1px;height:59.900000000000034px;background:#dfe1e6;"></div>
<div class="r" style="left:540.5px;top:192px;width:436.0px;height:311.5px;background:#ffffff;border:1px solid #e2e2e2;"></div>
<div class="t" style="left:758.30px;top:206.75px;font-size:14px;line-height:14px;color:#1a1a1a;font-weight:bold;font-style:normal;transform:translateX(-50%) scaleX(0.945);transform-origin:50% 0;">Échéances par Catégorie et Statut</div>
<div class="t" style="left:583.80px;top:455.78px;font-size:7.7px;line-height:7.7px;color:#333;font-weight:normal;font-style:normal;transform:translateX(-100%) scaleX(1.0);transform-origin:100% 0;">0</div>
<div class="r" style="left:587px;top:415.6px;width:331px;height:1px;background:#b3b3b3;"></div>
<div class="t" style="left:583.80px;top:411.58px;font-size:7.7px;line-height:7.7px;color:#333;font-weight:normal;font-style:normal;transform:translateX(-100%) scaleX(1.0);transform-origin:100% 0;">0.5</div>
<div class="r" style="left:587px;top:371.4px;width:331px;height:1px;background:#b3b3b3;"></div>
<div class="t" style="left:583.80px;top:367.38px;font-size:7.7px;line-height:7.7px;color:#333;font-weight:normal;font-style:normal;transform:translateX(-100%) scaleX(1.0);transform-origin:100% 0;">1</div>
<div class="r" style="left:587px;top:327.2px;width:331px;height:1px;background:#b3b3b3;"></div>
<div class="t" style="left:583.80px;top:323.18px;font-size:7.7px;line-height:7.7px;color:#333;font-weight:normal;font-style:normal;transform:translateX(-100%) scaleX(1.0);transform-origin:100% 0;">1.5</div>
<div class="r" style="left:587px;top:283.0px;width:331px;height:1px;background:#b3b3b3;"></div>
<div class="t" style="left:583.80px;top:278.98px;font-size:7.7px;line-height:7.7px;color:#333;font-weight:normal;font-style:normal;transform:translateX(-100%) scaleX(1.0);transform-origin:100% 0;">2</div>
<div class="r" style="left:587px;top:238.8px;width:331px;height:1px;background:#b3b3b3;"></div>
<div class="t" style="left:583.80px;top:234.78px;font-size:7.7px;line-height:7.7px;color:#333;font-weight:normal;font-style:normal;transform:translateX(-100%) scaleX(1.0);transform-origin:100% 0;">2.5</div>
<div class="r" style="left:586.5px;top:239.3px;width:1px;height:221.5px;background:#b3b3b3;"></div>
<div class="r" style="left:587px;top:459.8px;width:331px;height:1px;background:#b3b3b3;"></div>
<div class="t" style="left:610.64px;top:463.28px;font-size:7.7px;line-height:7.7px;color:#333;font-weight:normal;font-style:normal;transform:translateX(-50%) scaleX(1.0);transform-origin:50% 0;">Catégorie</div>
<div class="r" style="left:597.0px;top:371.9px;width:12.6px;height:88.4px;background:#ef4444;"></div>
<div class="r" style="left:611.0px;top:371.9px;width:12.6px;height:88.4px;background:#10b981;"></div>
<div class="t" style="left:657.93px;top:463.28px;font-size:7.7px;line-height:7.7px;color:#333;font-weight:normal;font-style:normal;transform:translateX(-50%) scaleX(1.0);transform-origin:50% 0;">Contrat</div>
<div class="r" style="left:643.3px;top:458.8px;width:14.6px;height:3px;background:#ffffff;"></div>
<div class="r" style="left:657.3px;top:458.8px;width:14.6px;height:3px;background:#ffffff;"></div>
<div class="t" style="left:705.21px;top:463.28px;font-size:7.7px;line-height:7.7px;color:#333;font-weight:normal;font-style:normal;transform:translateX(-50%) scaleX(1.0);transform-origin:50% 0;">Fiscal</div>
<div class="r" style="left:691.6px;top:371.9px;width:12.6px;height:88.4px;background:#ef4444;"></div>
<div class="r" style="left:705.6px;top:371.9px;width:12.6px;height:88.4px;background:#10b981;"></div>
<div class="t" style="left:752.50px;top:463.28px;font-size:7.7px;line-height:7.7px;color:#333;font-weight:normal;font-style:normal;transform:translateX(-50%) scaleX(1.0);transform-origin:50% 0;">RH</div>
<div class="r" style="left:737.9px;top:458.8px;width:14.6px;height:3px;background:#ffffff;"></div>
<div class="r" style="left:752.9px;top:283.5px;width:12.6px;height:176.8px;background:#10b981;"></div>
<div class="t" style="left:799.79px;top:463.28px;font-size:7.7px;line-height:7.7px;color:#333;font-weight:normal;font-style:normal;transform:translateX(-50%) scaleX(1.0);transform-origin:50% 0;">Juridique</div>
<div class="r" style="left:785.1px;top:458.8px;width:14.6px;height:3px;background:#ffffff;"></div>
<div class="r" style="left:800.1px;top:371.9px;width:12.6px;height:88.4px;background:#10b981;"></div>
<div class="t" style="left:847.07px;top:463.28px;font-size:7.7px;line-height:7.7px;color:#333;font-weight:normal;font-style:normal;transform:translateX(-50%) scaleX(1.0);transform-origin:50% 0;">Commercial</div>
<div class="r" style="left:832.4px;top:458.8px;width:14.6px;height:3px;background:#ffffff;"></div>
<div class="r" style="left:847.4px;top:371.9px;width:12.6px;height:88.4px;background:#10b981;"></div>
<div class="t" style="left:894.36px;top:463.28px;font-size:7.7px;line-height:7.7px;color:#333;font-weight:normal;font-style:normal;transform:translateX(-50%) scaleX(1.0);transform-origin:50% 0;">Technique</div>
<div class="r" style="left:879.7px;top:458.8px;width:14.6px;height:3px;background:#ffffff;"></div>
<div class="r" style="left:894.7px;top:283.5px;width:12.6px;height:176.8px;background:#10b981;"></div>
<div class="t" style="left:745.30px;top:480.87px;font-size:7.6px;line-height:7.6px;color:#222;font-weight:bold;font-style:normal;transform:translateX(-50%) scaleX(0.92);transform-origin:50% 0;">Catégorie</div>
<div class="t" style="left:557.6px;top:352.5px;font-size:7.8px;line-height:7.8px;color:#222;font-weight:bold;transform:translate(-50%,-50%) rotate(-90deg);">Nombre d’échéances</div>
<div class="r" style="left:930px;top:339.5px;width:4px;height:4px;background:#ef4444;"></div>
<div class="t" style="left:936.30px;top:337.78px;font-size:7.7px;line-height:7.7px;color:#333;font-weight:normal;font-style:normal;">En retard</div>
<div class="r" style="left:930px;top:350.5px;width:4px;height:4px;background:#10b981;"></div>
<div class="t" style="left:936.30px;top:348.78px;font-size:7.7px;line-height:7.7px;color:#333;font-weight:normal;font-style:normal;">À venir</div>
</div>
<svg class="s" style="left:0;top:0" width="1200" height="675" viewBox="0 0 1200 675"><path d="M7.5 23.7 H14.5 L17.5 26.7 V36.5 H7.5 Z" stroke="#4fa866" stroke-width="1" fill="#ffffff" /><path d="M14.5 23.7 V26.7 H17.5" stroke="#4fa866" stroke-width="1" fill="none" /><rect x="8.8" y="28.5" width="7.5" height="5.8" fill="#4fa866" stroke="none" stroke-width="1" rx="0" /><path d="M8.8 30.4 H16.3 M8.8 32.4 H16.3 M11.3 28.5 V34.3" stroke="#ffffff" stroke-width="0.6" fill="none" /><path d="M25.3 30.2 L30.099999999999998 30.2 L27.7 33.0 Z" fill="#1f1f1f"/><path d="M34.5 25 H40 L41.5 26.5 H48.5 V36.5 H34.5 Z" stroke="#e6a04e" stroke-width="1" fill="#fbd88a" /><path d="M34.5 36.5 L37 29.5 H50 L48.5 36.5 Z" stroke="#e6a04e" stroke-width="1" fill="#f8cd6e" /><path d="M54.6 30.2 L59.4 30.2 L57 33.0 Z" fill="#1f1f1f"/><path d="M64.5 23.7 H76 L77.5 25.2 V36.5 H64.5 Z" stroke="#b65bc0" stroke-width="1" fill="#cf7ad6" /><rect x="67" y="24.2" width="8" height="3.8" fill="#ffffff" stroke="none" stroke-width="1" rx="0" /><rect x="68" y="32.3" width="6" height="4.2" fill="#ffffff" stroke="none" stroke-width="1" rx="0" /><rect x="69.2" y="33.2" width="1.8" height="3.3" fill="#cf7ad6" stroke="none" stroke-width="1" rx="0" /><path d="M83.6 30.2 L88.4 30.2 L86 33.0 Z" fill="#1f1f1f"/><path d="M102 24.2 H109.5 L112.5 27.2 V36.5 H102 Z" stroke="#6a6a6a" stroke-width="1" fill="#ffffff" /><path d="M109.5 24.2 V27.2 H112.5" stroke="#6a6a6a" stroke-width="1" fill="none" /><path d="M108.5 30.5 C108 33 106.5 35.5 105 37 M105.5 36 C107.5 34.5 110.5 34.5 113 35 M108.5 30.5 C109 33 110.5 35 112 36.5" stroke="#e84a5f" stroke-width="0.9" fill="none" /><rect x="125.5" y="24.5" width="7" height="4" fill="#ffffff" stroke="#6a6a6a" stroke-width="1" rx="0" /><rect x="126.2" y="25.5" width="5.5" height="2.5" fill="#a6d3f2" stroke="none" stroke-width="1" rx="0" /><rect x="122.5" y="28.2" width="13.5" height="6.3" fill="#5b5b5b" stroke="none" stroke-width="1" rx="1" /><rect x="125" y="33" width="8.5" height="3.5" fill="#ffffff" stroke="#6a6a6a" stroke-width="1" rx="0" /><rect x="132.5" y="30.5" width="1.5" height="1" fill="#ffffff" stroke="none" stroke-width="1" rx="0" /><path d="M145.5 24.2 H153 L156 27.2 V36.5 H145.5 Z" stroke="#6a6a6a" stroke-width="1" fill="#ffffff" /><path d="M153 24.2 V27.2 H156" stroke="#6a6a6a" stroke-width="1" fill="none" /><circle cx="152.5" cy="32.6" r="2.4" fill="#e6f3fc" stroke="#5aa3e0" stroke-width="1"/><path d="M154.3 34.4 L157 37" stroke="#3d8fd6" stroke-width="1.2" fill="none" /><path d="M173.5 23.5 L180.5 33 M182.5 23.5 L175.5 33" stroke="#3f3f3f" stroke-width="1.1" fill="none" /><circle cx="174.2" cy="34.8" r="1.8" fill="#fff" stroke="#5aa3e0" stroke-width="0.9"/><circle cx="181.8" cy="34.8" r="1.8" fill="#fff" stroke="#5aa3e0" stroke-width="0.9"/><path d="M193.5 23.8 H199 L201 25.8 V32.5 H193.5 Z" stroke="#3f3f3f" stroke-width="1" fill="#ffffff" /><path d="M199 27.2 H204.5 L206.8 29.5 V36.5 H199 Z" stroke="#3f3f3f" stroke-width="1" fill="#ffffff" /><path d="M195 28.5 H198.5 M195 30.5 H198.5 M200.5 32.5 H205.3 M200.5 34.5 H205.3" stroke="#3d8fd6" stroke-width="0.9" fill="none" /><path d="M215.8 25.5 H226.5 V36.5 H215.8 Z" stroke="#c9c9c9" stroke-width="1" fill="#ececec" /><rect x="218.5" y="23.8" width="5" height="2.5" fill="#e0e0e0" stroke="#c9c9c9" stroke-width="0.8" rx="0" /><rect x="221" y="30" width="6.5" height="7" fill="#efefef" stroke="#c9c9c9" stroke-width="1" rx="0" /><path d="M233.4 30.2 L238.20000000000002 30.2 L235.8 33.0 Z" fill="#b8b8b8"/><path d="M255 23 C255 22.5 257.5 22.5 257.5 23 V28.5 H255 Z" stroke="#3f3f3f" stroke-width="1" fill="#ffffff" /><path d="M252 29 H260.5 V32 H252 Z" stroke="#3f3f3f" stroke-width="1" fill="#ffffff" /><rect x="251.8" y="32" width="9" height="5" fill="#f1b96b" stroke="none" stroke-width="1" rx="0" /><path d="M252.2 34.5 H260.5" stroke="#ffffff" stroke-width="0.7" fill="none" /><path d="M272.8 34.5 L276.5 24.5 L280 34.5 M274.2 31 H278.8" stroke="#3f3f3f" stroke-width="1.1" fill="none" /><path d="M272.5 36.8 H279" stroke="#3d8fd6" stroke-width="1" fill="none" /><path d="M278 35 L283.5 30 L286 32.5 L280.5 37.5 Z" stroke="#d92d35" stroke-width="0.8" fill="#e53945" /><path d="M299.5 31 C297 27 303 23.5 307 25.5 C311 27.5 310 32 306.5 35.5" stroke="#c9c9c9" stroke-width="1.2" fill="none" /><path d="M298 26 V31.2 H303" stroke="#c9c9c9" stroke-width="1.2" fill="none" /><path d="M317.20000000000005 30.2 L322.0 30.2 L319.6 33.0 Z" fill="#b8b8b8"/><path d="M339 31 C341.5 27 335.5 23.5 331.5 25.5 C327.5 27.5 328.5 32 332 35.5" stroke="#c9c9c9" stroke-width="1.2" fill="none" /><path d="M340.5 26 V31.2 H335.5" stroke="#c9c9c9" stroke-width="1.2" fill="none" /><path d="M346.6 30.2 L351.4 30.2 L349 33.0 Z" fill="#b8b8b8"/><circle cx="371.2" cy="28.3" r="4.6" fill="#ffffff" stroke="#3f3f3f" stroke-width="1.1"/><path d="M368 31.5 L363.5 36.5" stroke="#3f3f3f" stroke-width="1.6" fill="none" /><text x="371.2" y="31" font-family="Liberation Sans" font-size="8.5" fill="#3d8fd6" font-weight="normal" font-style="normal" text-anchor="middle" >a</text><text x="376" y="37.5" font-family="Liberation Sans" font-size="8.5" fill="#3f3f3f" font-weight="normal" font-style="normal" text-anchor="middle" >d</text><text x="391.3" y="30.6" font-family="Liberation Sans" font-size="9" fill="#555" font-weight="normal" font-style="normal" text-anchor="middle" letter-spacing="-0.4">abc</text><path d="M390.3 34.2 L392 36 L398.8 30.2" stroke="#3fae6a" stroke-width="1.2" fill="none" /><rect x="411.5" y="23.3" width="13" height="13" fill="#ffffff" stroke="#3f3f3f" stroke-width="1" rx="0" /><rect x="411.9" y="26.3" width="12.2" height="3.3" fill="#5aa6e8" stroke="none" stroke-width="1" rx="0" /><path d="M411.5 26.5 H424.5 M411.5 29.8 H424.5 M411.5 33.1 H424.5 M414.8 23.3 V36.3 M418 23.3 V36.3 M421.2 23.3 V36.3" stroke="#3f3f3f" stroke-width="0.8" fill="none" /><path d="M430.3 30.2 L435.09999999999997 30.2 L432.7 33.0 Z" fill="#1f1f1f"/><rect x="440.5" y="23.3" width="13" height="13" fill="#ffffff" stroke="#3f3f3f" stroke-width="1" rx="0" /><rect x="443.9" y="23.7" width="3.3" height="12.2" fill="#5aa6e8" stroke="none" stroke-width="1" rx="0" /><path d="M440.5 26.5 H453.5 M440.5 29.8 H453.5 M440.5 33.1 H453.5 M443.8 23.3 V36.3 M447 23.3 V36.3 M450.2 23.3 V36.3" stroke="#3f3f3f" stroke-width="0.8" fill="none" /><path d="M459.6 30.2 L464.4 30.2 L462 33.0 Z" fill="#1f1f1f"/><rect x="475.5" y="23.5" width="14" height="13.8" fill="#ffffff" stroke="#3f3f3f" stroke-width="1" rx="0" /><rect x="475.5" y="23.2" width="14" height="1.8" fill="#3f3f3f" stroke="none" stroke-width="1" rx="0" /><path d="M482.5 24 V37" stroke="#3f3f3f" stroke-width="0.9" fill="none" /><text x="479" y="30.2" font-family="Liberation Sans" font-size="7" fill="#3d8fd6" font-weight="normal" font-style="normal" text-anchor="middle" >A</text><text x="479" y="36.6" font-family="Liberation Sans" font-size="7" fill="#c04fc8" font-weight="normal" font-style="normal" text-anchor="middle" >Z</text><text x="486" y="30.2" font-family="Liberation Sans" font-size="7" fill="#c04fc8" font-weight="normal" font-style="normal" text-anchor="middle" >Z</text><text x="486" y="36.6" font-family="Liberation Sans" font-size="7" fill="#3d8fd6" font-weight="normal" font-style="normal" text-anchor="middle" >A</text><text x="500.5" y="29.6" font-family="Liberation Sans" font-size="8.5" fill="#3d8fd6" font-weight="normal" font-style="normal" text-anchor="middle" >A</text><text x="500.5" y="37.3" font-family="Liberation Sans" font-size="8.5" fill="#c04fc8" font-weight="normal" font-style="normal" text-anchor="middle" >Z</text><path d="M509 25 V35.5 M506 32.5 L509 35.5 L512 32.5" stroke="#666666" stroke-width="1.1" fill="none" /><text x="522.5" y="29.6" font-family="Liberation Sans" font-size="8.5" fill="#c04fc8" font-weight="normal" font-style="normal" text-anchor="middle" >Z</text><text x="522.5" y="37.3" font-family="Liberation Sans" font-size="8.5" fill="#3d8fd6" font-weight="normal" font-style="normal" text-anchor="middle" >A</text><path d="M531 25 V35.5 M528 32.5 L531 35.5 L534 32.5" stroke="#666666" stroke-width="1.1" fill="none" /><path d="M542.5 24 H555 L550.5 30.5 V35.5 L547 33.5 V30.5 Z" stroke="#666666" stroke-width="1.1" fill="#ffffff" /><path d="M552.5 30 L550 33.5 H552.5 L550.5 37 L555.5 32.5 H553 L555 30 Z" stroke="#f0a030" stroke-width="0.5" fill="#f5a623" /><rect x="569.7" y="23.8" width="12" height="12.5" fill="#ffffff" stroke="#666666" stroke-width="1" rx="0" /><circle cx="572.8" cy="27.2" r="1.4" fill="#f5c04a"/><path d="M570 36 L574 31.5 L576.5 33.5 L579.5 30.5 L581.7 32.5 V36 Z" stroke="none" stroke-width="0" fill="#5da4e0" /><rect x="591.3" y="27.2" width="2.8" height="9.5" fill="#5da4e0" stroke="#3d8fd6" stroke-width="0.6" rx="0" /><rect x="596.2" y="23.6" width="2.8" height="13.1" fill="#f7cf7a" stroke="#e6a04e" stroke-width="0.6" rx="0" /><rect x="600.5" y="29" width="3.3" height="7.7" fill="#6b6b6b" stroke="none" stroke-width="1" rx="0" /><rect x="613.7" y="23.8" width="12" height="12.5" fill="#ffffff" stroke="#666666" stroke-width="1" rx="0" /><rect x="614.2" y="24.3" width="11" height="2" fill="#d0d0d0" stroke="none" stroke-width="1" rx="0" /><rect x="614.2" y="24.3" width="2" height="11.5" fill="#d0d0d0" stroke="none" stroke-width="1" rx="0" /><path d="M617.5 34 C621 34 623.5 31 623.5 27.5 M621.5 29 L623.5 27 L625 29.3 M616.5 32 L617.5 34.2 L620 35.3" stroke="#3d8fd6" stroke-width="0.9" fill="none" /><text x="645.8" y="37" font-family="Liberation Sans" font-size="19" fill="#555" font-weight="normal" font-style="normal" text-anchor="middle" font-weight="normal">Ω</text><path d="M658.6 30.2 L663.4 30.2 L661 33.0 Z" fill="#1f1f1f"/><circle cx="675.2" cy="28" r="5.2" fill="none" stroke="#3f3f3f" stroke-width="1"/><path d="M670 28 H680.4 M675.2 22.8 C672.5 25 672.5 31 675.2 33.2 M675.2 22.8 C677.9 25 677.9 31 675.2 33.2 M671 25.3 H679.4 M671 30.7 H679.4" stroke="#3f3f3f" stroke-width="0.8" fill="none" /><rect x="671.5" y="33.5" width="5.5" height="3.5" fill="#ffffff" stroke="#3d8fd6" stroke-width="1.1" rx="1.5" /><rect x="678.5" y="33.5" width="5.5" height="3.5" fill="#ffffff" stroke="#3d8fd6" stroke-width="1.1" rx="1.5" /><path d="M675 35.25 H680.5" stroke="#3d8fd6" stroke-width="1.1" fill="none" /><path d="M691.8 23.8 H704.5 V33.5 H697.5 L695 36.5 V33.5 H691.8 Z" stroke="#555" stroke-width="1.1" fill="#ffffff" /><path d="M715.5 23.8 H722.5 L725.5 26.8 V36.5 H715.5 Z" stroke="#cfcfcf" stroke-width="1" fill="#e4e4e4" /><rect x="740.8" y="23.5" width="13" height="13.5" fill="#ffffff" stroke="#666666" stroke-width="1" rx="0" /><rect x="741.3" y="24" width="9" height="5" fill="#5aa6e8" stroke="none" stroke-width="1" rx="0" /><path d="M740.8 26.5 H753.8 M740.8 29.5 H753.8 M740.8 32.5 H753.8 M745 23.5 V37 M749.5 23.5 V37" stroke="#666666" stroke-width="0.7" fill="none" /><rect x="748" y="32.5" width="7" height="4.5" fill="#5b5b5b" stroke="none" stroke-width="1" rx="1" /><rect x="749.3" y="31.5" width="4.5" height="1.5" fill="#ffffff" stroke="#666666" stroke-width="0.6" rx="0" /><rect x="761.5" y="23.2" width="13" height="14" fill="#ffffff" stroke="#666666" stroke-width="1" rx="0" /><rect x="761.5" y="23.2" width="13" height="3.3" fill="#3d8fd6" stroke="none" stroke-width="1" rx="0" /><rect x="761.5" y="23.2" width="3.5" height="14" fill="#3d8fd6" stroke="none" stroke-width="1" rx="0" /><path d="M765 29.5 H774.5 M765 33 H774.5 M769.5 26.5 V37" stroke="#666666" stroke-width="0.7" fill="none" /><path d="M763.2 22.5 V26" stroke="#ffffff" stroke-width="0.7" fill="none" /><path d="M780.6 30.2 L785.4 30.2 L783 33.0 Z" fill="#1f1f1f"/><rect x="792" y="23.5" width="13.2" height="13.2" fill="#ffffff" stroke="#666666" stroke-width="1" rx="0" /><rect x="792" y="23.3" width="13.2" height="1.8" fill="#555" stroke="none" stroke-width="1" rx="0" /><path d="M792.5 30.2 H804.7" stroke="#3d8fd6" stroke-width="0.9" fill="none" stroke-dasharray="1.8 1.2"/><rect x="819.5" y="28.5" width="7" height="7.5" fill="#ffffff" stroke="#666666" stroke-width="1" rx="0" /><circle cx="829" cy="27.3" r="3.8" fill="#ffffff" stroke="#666666" stroke-width="1"/><path d="M827 28.5 L831.8 33 L827 37.5 L822.2 33 Z" stroke="#666666" stroke-width="1" fill="#ffffff" /><text x="228.5" y="61.6" font-family="Liberation Sans" font-size="12.5" fill="#333" font-weight="bold" font-style="normal" text-anchor="middle" >B</text><text x="251.3" y="61.6" font-family="Liberation Serif" font-size="12.5" fill="#444" font-weight="normal" font-style="italic" text-anchor="middle" >I</text><text x="271.9" y="61.6" font-family="Liberation Sans" font-size="11.5" fill="#444" font-weight="normal" font-style="normal" text-anchor="middle" >U</text><rect x="268.3" y="62.3" width="7.5" height="1.3" fill="#7fb4e0" stroke="none" stroke-width="1" rx="0" /><path d="M284.6 57.1 L289.4 57.1 L287 59.9 Z" fill="#1f1f1f"/><text x="306.5" y="60.5" font-family="Liberation Sans" font-size="12" fill="#333" font-weight="normal" font-style="normal" text-anchor="middle" >A</text><rect x="298.7" y="61.4" width="15.6" height="3.5" fill="#c8202a" stroke="none" stroke-width="1" rx="0" /><path d="M319.40000000000003 57.1 L324.2 57.1 L321.8 59.9 Z" fill="#1f1f1f"/><rect x="327.8" y="61.9" width="16.2" height="3.9" fill="#f2ea00" stroke="none" stroke-width="1" rx="0" /><path d="M333 54.5 L337.5 51 L340 55 L336 60 L331.5 57.5 Z" stroke="#555" stroke-width="0.9" fill="#ffffff" /><path d="M330 59 V53 H333" stroke="#2a6fb0" stroke-width="1.8" fill="none" /><path d="M348.6 57.1 L353.4 57.1 L351 59.9 Z" fill="#1f1f1f"/><rect x="366" y="50" width="12" height="1" fill="#555" stroke="none" stroke-width="1" rx="0" shape-rendering="crispEdges"/><rect x="366" y="52" width="6" height="1" fill="#555" stroke="none" stroke-width="1" rx="0" shape-rendering="crispEdges"/><rect x="366" y="55" width="12" height="1" fill="#555" stroke="none" stroke-width="1" rx="0" shape-rendering="crispEdges"/><rect x="366" y="58" width="6" height="1" fill="#555" stroke="none" stroke-width="1" rx="0" shape-rendering="crispEdges"/><rect x="366" y="61" width="12" height="1" fill="#555" stroke="none" stroke-width="1" rx="0" shape-rendering="crispEdges"/><rect x="366" y="63" width="6" height="1" fill="#555" stroke="none" stroke-width="1" rx="0" shape-rendering="crispEdges"/><rect x="388" y="50" width="12" height="1" fill="#555" stroke="none" stroke-width="1" rx="0" shape-rendering="crispEdges"/><rect x="391" y="52" width="6" height="1" fill="#555" stroke="none" stroke-width="1" rx="0" shape-rendering="crispEdges"/><rect x="388" y="55" width="12" height="1" fill="#555" stroke="none" stroke-width="1" rx="0" shape-rendering="crispEdges"/><rect x="391" y="58" width="6" height="1" fill="#555" stroke="none" stroke-width="1" rx="0" shape-rendering="crispEdges"/><rect x="388" y="61" width="12" height="1" fill="#555" stroke="none" stroke-width="1" rx="0" shape-rendering="crispEdges"/><rect x="391" y="63" width="6" height="1" fill="#555" stroke="none" stroke-width="1" rx="0" shape-rendering="crispEdges"/><rect x="409" y="50" width="13" height="1" fill="#555" stroke="none" stroke-width="1" rx="0" shape-rendering="crispEdges"/><rect x="415" y="52" width="7" height="1" fill="#555" stroke="none" stroke-width="1" rx="0" shape-rendering="crispEdges"/><rect x="409" y="55" width="13" height="1" fill="#555" stroke="none" stroke-width="1" rx="0" shape-rendering="crispEdges"/><rect x="415" y="58" width="7" height="1" fill="#555" stroke="none" stroke-width="1" rx="0" shape-rendering="crispEdges"/><rect x="409" y="61" width="13" height="1" fill="#555" stroke="none" stroke-width="1" rx="0" shape-rendering="crispEdges"/><rect x="415" y="63" width="7" height="1" fill="#555" stroke="none" stroke-width="1" rx="0" shape-rendering="crispEdges"/><rect x="437" y="50" width="12" height="1" fill="#555" stroke="none" stroke-width="1" rx="0" shape-rendering="crispEdges"/><rect x="437" y="52" width="7" height="1" fill="#555" stroke="none" stroke-width="1" rx="0" shape-rendering="crispEdges"/><rect x="437" y="55" width="12" height="1" fill="#555" stroke="none" stroke-width="1" rx="0" shape-rendering="crispEdges"/><path d="M442.7 64.5 V57.5 M440.3 60 L442.7 57.5 L445.1 60" stroke="#3d8fd6" stroke-width="1" fill="none" /><rect x="459" y="55" width="11" height="1" fill="#555" stroke="none" stroke-width="1" rx="0" shape-rendering="crispEdges"/><rect x="459" y="58" width="11" height="1" fill="#555" stroke="none" stroke-width="1" rx="0" shape-rendering="crispEdges"/><path d="M464.4 49.5 V54.5 M462 52 L464.4 54.5 L466.8 52" stroke="#3d8fd6" stroke-width="1" fill="none" /><path d="M464.4 64.5 V59.5 M462 62 L464.4 59.5 L466.8 62" stroke="#3d8fd6" stroke-width="1" fill="none" /><rect x="475.4" y="45.4" width="21.6" height="23.4" fill="#dad8d5" stroke="none" stroke-width="1" rx="3" /><rect x="481" y="58" width="7" height="1" fill="#555" stroke="none" stroke-width="1" rx="0" shape-rendering="crispEdges"/><rect x="481" y="61" width="12" height="1" fill="#555" stroke="none" stroke-width="1" rx="0" shape-rendering="crispEdges"/><rect x="481" y="63" width="7" height="1" fill="#555" stroke="none" stroke-width="1" rx="0" shape-rendering="crispEdges"/><path d="M486.1 49.5 V56 M483.7 53.5 L486.1 56 L488.5 53.5" stroke="#3d8fd6" stroke-width="1" fill="none" /><rect x="508" y="50" width="13" height="1" fill="#555" stroke="none" stroke-width="1" rx="0" shape-rendering="crispEdges"/><rect x="508" y="52" width="6" height="1" fill="#555" stroke="none" stroke-width="1" rx="0" shape-rendering="crispEdges"/><rect x="508" y="55" width="8" height="1" fill="#555" stroke="none" stroke-width="1" rx="0" shape-rendering="crispEdges"/><rect x="508" y="58" width="3" height="1" fill="#555" stroke="none" stroke-width="1" rx="0" shape-rendering="crispEdges"/><rect x="508" y="63" width="13" height="1" fill="#555" stroke="none" stroke-width="1" rx="0" shape-rendering="crispEdges"/><path d="M513 58.2 H517.5 C520 58.2 520 61.5 518 61.5" stroke="#3d8fd6" stroke-width="0.9" fill="none" /><path d="M516.8 60.2 L518.2 61.6 L516.8 63" stroke="#3d8fd6" stroke-width="0.9" fill="none" /><rect x="534.7" y="50.5" width="13" height="13" fill="#e9e9e9" stroke="#cfcfcf" stroke-width="1" rx="0" /><path d="M534.7 54 H547.7 M534.7 57 H547.7 M534.7 60.3 H547.7 M538.7 50.5 V54 M543.2 50.5 V54 M538.7 60.3 V63.5 M543.2 60.3 V63.5" stroke="#d2d2d2" stroke-width="0.8" fill="none" /><rect x="556.7" y="50.5" width="13" height="13" fill="#e9e9e9" stroke="#cfcfcf" stroke-width="1" rx="0" /><path d="M556.7 54 H569.7 M556.7 57 H569.7 M556.7 60.3 H569.7 M560.7 50.5 V54 M565.2 50.5 V54 M560.7 60.3 V63.5 M565.2 60.3 V63.5" stroke="#d2d2d2" stroke-width="0.8" fill="none" /><rect x="578.7" y="50.5" width="13" height="13" fill="#e9e9e9" stroke="#cfcfcf" stroke-width="1" rx="0" /><path d="M578.7 54 H591.7 M578.7 57 H591.7 M578.7 60.3 H591.7 M582.7 50.5 V54 M587.2 50.5 V54 M582.7 60.3 V63.5 M587.2 60.3 V63.5" stroke="#d2d2d2" stroke-width="0.8" fill="none" /><path d="M603.8 55.5 V53.3 H618.2 V55.5" stroke="#3f3f3f" stroke-width="1" fill="none" /><path d="M603.8 60 V63" stroke="#3f3f3f" stroke-width="1" fill="none" /><circle cx="610.5" cy="56.8" r="1.8" fill="#3f3f3f"/><rect x="607" y="60" width="3.5" height="3.6" fill="#ffffff" stroke="#3f3f3f" stroke-width="0.9" rx="1.5" /><rect x="611" y="58.5" width="3" height="5" fill="#ffffff" stroke="#3f3f3f" stroke-width="0.9" rx="0" /><rect x="614.5" y="57.3" width="3.3" height="6.3" fill="#ffffff" stroke="#3f3f3f" stroke-width="0.9" rx="0" /><path d="M623.6 57.1 L628.4 57.1 L626 59.9 Z" fill="#1f1f1f"/><text x="641.5" y="63.3" font-family="Liberation Sans" font-size="14" fill="#555" font-weight="normal" font-style="normal" text-anchor="middle" font-weight="normal">%</text><text x="663.2" y="63.3" font-family="Liberation Sans" font-size="13.5" fill="#555" font-weight="normal" font-style="normal" text-anchor="middle" letter-spacing="-1.2">0.0</text><rect x="679.5" y="52" width="12.5" height="11.5" fill="#ffffff" stroke="#3f3f3f" stroke-width="1" rx="0" /><rect x="679.5" y="51.5" width="12.5" height="2.3" fill="#3f3f3f" stroke="none" stroke-width="1" rx="0" /><path d="M682 50.3 V52.5 M689.5 50.3 V52.5" stroke="#3f3f3f" stroke-width="1" fill="none" /><text x="685.8" y="62.3" font-family="Liberation Sans" font-size="8" fill="#3f3f3f" font-weight="normal" font-style="normal" text-anchor="middle" >7</text><text x="712" y="63.3" font-family="Liberation Sans" font-size="12.5" fill="#555" font-weight="normal" font-style="normal" text-anchor="middle" letter-spacing="-1.5">.00</text><path d="M716.7 59.5 V65 M714 62.3 H719.4" stroke="#3d8fd6" stroke-width="1.1" fill="none" /><text x="733.5" y="63.3" font-family="Liberation Sans" font-size="12.5" fill="#555" font-weight="normal" font-style="normal" text-anchor="middle" letter-spacing="-1.5">.00</text><path d="M735.5 58.5 L740.8 63.8 M740.8 58.5 L735.5 63.8" stroke="#e04040" stroke-width="1.1" fill="none" /><rect x="757" y="49" width="12" height="1" fill="#555" stroke="none" stroke-width="1" rx="0" shape-rendering="crispEdges"/><rect x="763" y="53" width="6" height="1" fill="#555" stroke="none" stroke-width="1" rx="0" shape-rendering="crispEdges"/><rect x="763" y="56" width="6" height="1" fill="#555" stroke="none" stroke-width="1" rx="0" shape-rendering="crispEdges"/><rect x="763" y="60" width="6" height="1" fill="#555" stroke="none" stroke-width="1" rx="0" shape-rendering="crispEdges"/><rect x="757" y="63" width="12" height="1" fill="#555" stroke="none" stroke-width="1" rx="0" shape-rendering="crispEdges"/><path d="M755 56.7 H761 M758.6 54.3 L761 56.7 L758.6 59.1" stroke="#3d8fd6" stroke-width="1" fill="none" /><rect x="779" y="49" width="12" height="1" fill="#555" stroke="none" stroke-width="1" rx="0" shape-rendering="crispEdges"/><rect x="785" y="53" width="6" height="1" fill="#555" stroke="none" stroke-width="1" rx="0" shape-rendering="crispEdges"/><rect x="785" y="56" width="6" height="1" fill="#555" stroke="none" stroke-width="1" rx="0" shape-rendering="crispEdges"/><rect x="785" y="60" width="6" height="1" fill="#555" stroke="none" stroke-width="1" rx="0" shape-rendering="crispEdges"/><rect x="779" y="63" width="12" height="1" fill="#555" stroke="none" stroke-width="1" rx="0" shape-rendering="crispEdges"/><path d="M783.5 56.7 H777.5 M779.9 54.3 L777.5 56.7 L779.9 59.1" stroke="#3d8fd6" stroke-width="1" fill="none" /><rect x="803.5" y="51.3" width="12" height="12" fill="#ffffff" stroke="#555" stroke-width="1" rx="0" /><path d="M809.5 51.3 V63.3 M803.5 57.3 H815.5" stroke="#555" stroke-width="1" fill="none" /><path d="M803.5 63.3 H815.5" stroke="#f0a040" stroke-width="1" fill="none" /><path d="M822.6 57.1 L827.4 57.1 L825 59.9 Z" fill="#1f1f1f"/><rect x="833" y="50.3" width="12" height="1.5" fill="#c8c8c8" stroke="none" stroke-width="1" rx="0" /><rect x="833" y="54.3" width="12" height="1.5" fill="#c8c8c8" stroke="none" stroke-width="1" rx="0" /><path d="M833 58.2 H845" stroke="#c8c8c8" stroke-width="0.9" fill="none" stroke-dasharray="2 1"/><path d="M833 60.7 H845" stroke="#c8c8c8" stroke-width="0.9" fill="none" stroke-dasharray="1 1.2"/><rect x="833" y="62.8" width="12" height="1.2" fill="#c8c8c8" stroke="none" stroke-width="1" rx="0" /><path d="M851.6 57.1 L856.4 57.1 L854 59.9 Z" fill="#bdbdbd"/><rect x="861.5" y="50.3" width="13.5" height="9.6" fill="#f0f0f0" stroke="#7fb6e6" stroke-width="1" rx="0" /><rect x="862.8" y="51.6" width="10.9" height="7" fill="#f3f3f3" stroke="#555" stroke-width="0.8" rx="0" /><rect x="860.3" y="61.9" width="15.7" height="3.2" fill="#2c6aa8" stroke="none" stroke-width="1" rx="0" /><path d="M881.3000000000001 57.1 L886.1 57.1 L883.7 59.9 Z" fill="#1f1f1f"/><rect x="896.5" y="50.3" width="12.5" height="11.5" fill="#ffffff" stroke="#555" stroke-width="1" rx="0" /><rect x="897" y="50.8" width="11.5" height="2.7" fill="#7fd39a" stroke="none" stroke-width="1" rx="0" /><rect x="897" y="53.5" width="11.5" height="2.7" fill="#f28b8b" stroke="none" stroke-width="1" rx="0" /><path d="M896.5 53.5 H909 M896.5 56.2 H909 M896.5 59 H909 M900.5 50.3 V61.8 M904.8 50.3 V61.8" stroke="#555" stroke-width="0.6" fill="none" /><rect x="902.3" y="57" width="7.5" height="7.5" fill="#ffffff" stroke="#555" stroke-width="1" rx="0" /><path d="M903.8 59.8 H908.3 M903.8 61.8 H908.3 M907.3 58.3 L904.8 63.3" stroke="#333" stroke-width="0.7" fill="none" /><path d="M915.9 57.1 L920.6999999999999 57.1 L918.3 59.9 Z" fill="#1f1f1f"/><rect x="927.3" y="45.4" width="21.9" height="23.6" fill="#dad8d5" stroke="none" stroke-width="1" rx="3" /><path d="M940.5 50.3 V63.7 M943.8 50.3 V63.7 M945.2 50.5 H939 C935 50.5 935 57 939 57 H940.5" stroke="#555" stroke-width="1.1" fill="none" /><path d="M932 61 H937.8 M935.8 59 L937.8 61 L935.8 63" stroke="#3d8fd6" stroke-width="1.1" fill="none" /><path d="M959.5 50.3 V63.7 M962.5 50.3 V63.7 M964 50.5 H958 C954 50.5 954 57 958 57 H959.5" stroke="#555" stroke-width="1.1" fill="none" /><rect x="959" y="57" width="3.2" height="6.7" fill="#bdbdbd" stroke="none" stroke-width="1" rx="0" /><path d="M967.5 61 H961.7 M963.7 59 L961.7 61 L963.7 63" stroke="#3d8fd6" stroke-width="1.1" fill="none" /><rect x="976.9" y="45.4" width="21.8" height="23.6" fill="#dad8d5" stroke="none" stroke-width="1" rx="3" /><text x="984.7" y="59.6" font-family="Liberation Sans" font-size="11.5" fill="#3d8fd6" font-weight="bold" font-style="normal" text-anchor="middle" >A</text><path d="M989 52 H994 M992.3 50.6 L994 52 L992.3 53.4 M989 55.5 H994 M992.3 54.1 L994 55.5 L992.3 56.9 M989 58.6 H994 M992.3 57.2 L994 58.6 L992.3 60" stroke="#333" stroke-width="0.8" fill="none" /><path d="M981.5 62.8 H994.5 M992.5 61.2 L994.5 62.8 L992.5 64.4" stroke="#333" stroke-width="0.9" fill="none" /><path d="M1003 50 V63.5 M1001.5 62 L1003 63.5 L1004.5 62 M1007 57 V63.5 M1005.5 62 L1007 63.5 L1008.5 62 M1011 57 V63.5 M1009.5 62 L1011 63.5 L1012.5 62 M1015 57 V63.5 M1013.5 62 L1015 63.5 L1016.5 62" stroke="#444" stroke-width="0.8" fill="none" /><text x="1011" y="57.5" font-family="Liberation Sans" font-size="10" fill="#3d8fd6" font-weight="bold" font-style="normal" text-anchor="middle" >A</text><path d="M1006.5 50 V55.5" stroke="#444" stroke-width="0.8" fill="none" /><text x="123.2" y="88.3" font-family="Liberation Serif" font-size="12" fill="#3d8fd6" font-weight="normal" font-style="italic" text-anchor="middle" >ƒ</text><text x="127.3" y="88.3" font-family="Liberation Serif" font-size="9.5" fill="#3d8fd6" font-weight="normal" font-style="italic" text-anchor="middle" >x</text><path d="M144 78.3 H136.2 L140.5 84.2 L136.2 90 H144.2" stroke="#555" stroke-width="1" fill="none" /><path d="M149.79999999999998 83.2 L154.6 83.2 L152.2 86.0 Z" fill="#1f1f1f"/><rect x="161.2" y="81.3" width="7.8" height="1.4" fill="#444" stroke="none" stroke-width="1" rx="0" /><rect x="161.2" y="85.6" width="7.8" height="1.4" fill="#444" stroke="none" stroke-width="1" rx="0" /><rect x="1176.7" y="80.2" width="9.3" height="1.3" fill="#333" stroke="none" stroke-width="1" rx="0" /><rect x="1176.7" y="84.2" width="9.3" height="1.3" fill="#333" stroke="none" stroke-width="1" rx="0" /><rect x="1176.7" y="88.2" width="9.3" height="1.3" fill="#333" stroke="none" stroke-width="1" rx="0" /><rect x="1175.5" y="108.5" width="12" height="13" fill="#ffffff" stroke="#555" stroke-width="1" rx="0" /><rect x="1175.5" y="108.3" width="12" height="2.4" fill="#555" stroke="none" stroke-width="1" rx="0" /><path d="M1177.5 113.5 H1185.5 M1177.5 117.3 H1185.5" stroke="#3d8fd6" stroke-width="0.9" fill="none" /><path d="M1182.8 111.8 L1180.8 115.2 M1182.8 115.6 L1180.8 119" stroke="#3d8fd6" stroke-width="0.9" fill="none" /><text x="1180" y="149.5" font-family="Liberation Sans" font-size="14" fill="#333" font-weight="normal" font-style="normal" text-anchor="middle" >A</text><path d="M1189 142 L1184.5 148 M1184.5 148 C1183 148.5 1182 150 1182.5 152 C1184 152 1185.5 150.5 1185.5 149" stroke="#3d8fd6" stroke-width="1.3" fill="#5da4e0" /><path d="M1174.5 167 H1179 L1180.5 168.5 H1187 V178.5 H1174.5 Z" stroke="#e6a04e" stroke-width="1" fill="#fbd88a" /><rect x="1180" y="171.5" width="8.5" height="7.5" fill="#ffffff" stroke="#555" stroke-width="0.9" rx="0" /><path d="M1180.5 178.5 L1183 175 L1185 177 L1188 174 V178.5 Z" stroke="none" stroke-width="0" fill="#5da4e0" /><circle cx="1181" cy="201.8" r="6.2" fill="#fff" stroke="#444" stroke-width="1"/><path d="M1184.5 198.3 L1182 203 L1177.5 205.3 L1180 200.6 Z" stroke="none" stroke-width="0" fill="#3d8fd6" /><text x="1179.3" y="236.5" font-family="Liberation Serif" font-size="15" fill="#3d8fd6" font-weight="normal" font-style="italic" text-anchor="middle" >ƒ</text><text x="1184.6" y="236.5" font-family="Liberation Serif" font-size="11" fill="#3d8fd6" font-weight="normal" font-style="italic" text-anchor="middle" >x</text><rect x="7" y="661.5" width="10.5" height="10.5" fill="none" stroke="#9a9a9a" stroke-width="1" rx="1" /><path d="M9.3 661.5 V665 H15.2 V661.5" stroke="#9a9a9a" stroke-width="0.9" fill="none" /><path d="M9.3 672 V668 H15.2 V672 M10.8 669.5 V672" stroke="#9a9a9a" stroke-width="0.9" fill="none" /><rect x="817.8" y="663.5" width="10.5" height="6" fill="#eef5fc" stroke="#4a90d9" stroke-width="1" rx="0" /><path d="M833.8 661.5 V672 M832 661.5 H835.6 M832 672 H835.6" stroke="#555" stroke-width="0.9" fill="none" /><path d="M6.8 644 H8.8 V656 H6.8 Z" stroke="#d2d2d2" stroke-width="0.9" fill="none" /><path d="M17 644.5 L10.5 650.2 L17 655.8 L18.2 654.6 L13 650.2 L18.2 645.7 Z" stroke="#d2d2d2" stroke-width="0.9" fill="none" /><path d="M27 646 L21.5 650.2 L27 654.4 Z M33.5 646 L28 650.2 L33.5 654.4 Z" stroke="#d2d2d2" stroke-width="0.9" fill="none" /><path d="M37.5 646 L43 650.2 L37.5 654.4 Z M44 646 L49.5 650.2 L44 654.4 Z" stroke="#d2d2d2" stroke-width="0.9" fill="none" /><path d="M54 644.5 L60.5 650.2 L54 655.8 L52.8 654.6 L58 650.2 L52.8 645.7 Z" stroke="#d2d2d2" stroke-width="0.9" fill="none" /><path d="M63.2 644 H65.2 V656 H63.2 Z" stroke="#d2d2d2" stroke-width="0.9" fill="none" /><circle cx="84.6" cy="648.8" r="2.6" fill="#3f6fc6"/><path d="M83.2 648.8 H86 M84.6 647.4 V650.2" stroke="#ffffff" stroke-width="0.8" fill="none" /></svg>
</body></html>
